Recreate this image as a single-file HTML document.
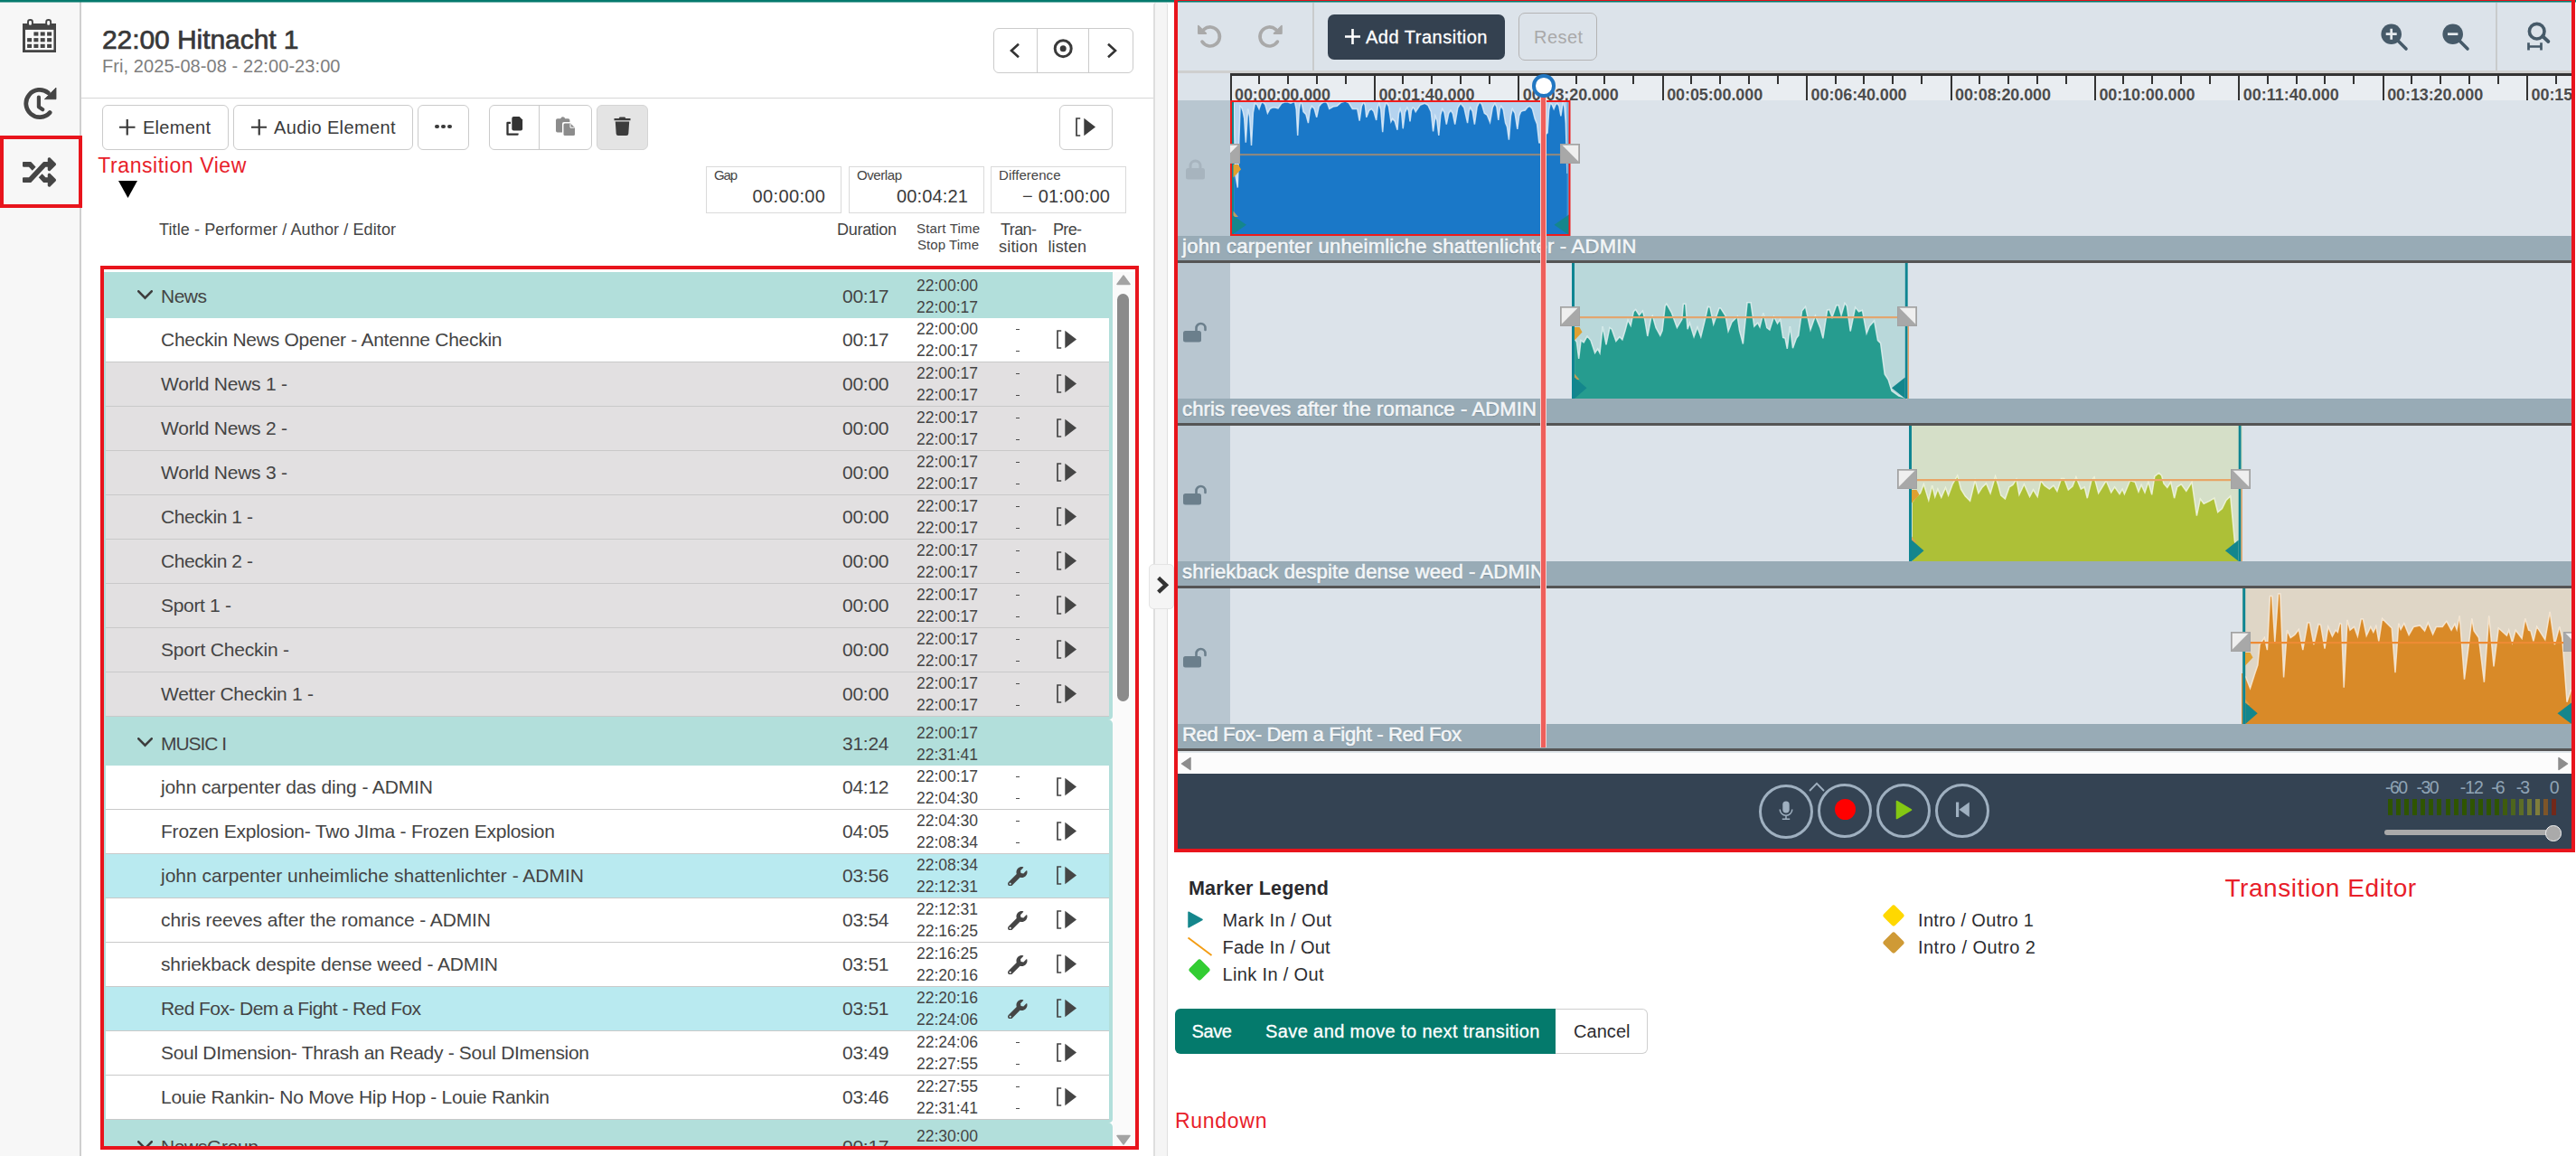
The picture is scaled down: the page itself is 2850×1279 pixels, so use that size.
<!DOCTYPE html>
<html><head><meta charset="utf-8"><title>Transition Editor</title><style>
html,body{margin:0;padding:0;}
body{width:2850px;height:1279px;position:relative;overflow:hidden;background:#fff;font-family:"Liberation Sans",sans-serif;}
.b{position:absolute;box-sizing:border-box;display:block;}
.t{position:absolute;white-space:pre;display:block;}
</style></head>
<body>
<div class="b" style="left:0px;top:0px;width:2850px;height:2px;background:#057a6d;"></div>
<div class="b" style="left:0px;top:2px;width:2850px;height:1px;background:rgba(5,122,109,0.5);z-index:5;"></div>
<div class="b" style="left:0px;top:2px;width:88px;height:1277px;background:#f7f7f7;"></div>
<div class="b" style="left:88px;top:2px;width:2px;height:1277px;background:#cfcfcf;"></div>
<svg class="b" style="left:25px;top:21px;" width="37" height="37" viewBox="0 0 37 37"><path fill="#454545" d="M0 5h37v32H0z"/><rect x="3" y="11.900" width="31.400" height="22.300" fill="#f9f9f9"/><rect x="12.4" y="14.4" width="5" height="4.2" fill="#454545"/><rect x="19.7" y="14.4" width="5" height="4.2" fill="#454545"/><rect x="27.1" y="14.4" width="5" height="4.2" fill="#454545"/><rect x="5.1" y="21.1" width="5" height="4.2" fill="#454545"/><rect x="12.4" y="21.1" width="5" height="4.2" fill="#454545"/><rect x="19.7" y="21.1" width="5" height="4.2" fill="#454545"/><rect x="27.1" y="21.1" width="5" height="4.2" fill="#454545"/><rect x="5.1" y="27.8" width="5" height="4.2" fill="#454545"/><rect x="12.4" y="27.8" width="5" height="4.2" fill="#454545"/><rect x="19.7" y="27.8" width="5" height="4.2" fill="#454545"/><rect x="27.1" y="27.8" width="5" height="4.2" fill="#454545"/><rect x="6.0" y="1" width="4.900" height="6.800" rx="2.300" fill="#f7f7f7" stroke="#454545" stroke-width="1.900"/><rect x="26.2" y="1" width="4.900" height="6.800" rx="2.300" fill="#f7f7f7" stroke="#454545" stroke-width="1.900"/></svg>
<svg class="b" style="left:26px;top:96px;" width="38" height="38" viewBox="0 0 38 38"><path d="M27.20 6.60A15.1 15.1 0 1 0 29.12 28.60" fill="none" stroke="#454545" stroke-width="4.800" stroke-linecap="round"/><path d="M36 1V13.700H23.300z" fill="#454545" stroke="#454545" stroke-width="0.800" stroke-linejoin="round"/><path d="M16.900 11.500V22.300L21.300 25.200" fill="none" stroke="#454545" stroke-width="4.200" stroke-linecap="round" stroke-linejoin="round"/></svg>
<svg class="b" style="left:25px;top:171.5px;" width="37" height="37" viewBox="0 0 512 512"><path fill="#454545" d="M504.971 359.029c9.373 9.373 9.373 24.569 0 33.941l-80 79.984c-15.01 15.01-40.971 4.49-40.971-16.971V416h-58.785a12.004 12.004 0 0 1-8.773-3.812l-70.556-75.596 53.333-57.143L352 336h32v-39.981c0-21.438 25.943-31.998 40.971-16.971l80 79.981zM12 176h84l52.781 56.551 53.333-57.143-70.556-75.596A11.999 11.999 0 0 0 122.785 96H12c-6.627 0-12 5.373-12 12v56c0 6.627 5.373 12 12 12zm372 0v39.984c0 21.46 25.961 31.98 40.971 16.971l80-79.984c9.373-9.373 9.373-24.569 0-33.941l-80-79.981C409.943 24.021 384 34.582 384 56.019V96h-58.785a12.004 12.004 0 0 0-8.773 3.812L96 336H12c-6.627 0-12 5.373-12 12v56c0 6.627 5.373 12 12 12h110.785c3.326 0 6.503-1.381 8.773-3.812L352 176h32z"/></svg>
<div class="b" style="left:0px;top:150px;width:91px;height:80px;border:4px solid #e8141c;"></div>
<span class="t" style="left:113.00px;top:29.21px;font-size:30px;line-height:30px;color:#383838;letter-spacing:-0.066px;-webkit-text-stroke:0.7px #383838;">22:00 Hitnacht 1</span>
<span class="t" style="left:113.00px;top:63.07px;font-size:20px;line-height:20px;color:#7e7e7e;letter-spacing:0.079px;">Fri, 2025-08-08 - 22:00-23:00</span>
<div class="b" style="left:90px;top:108px;width:1186px;height:1px;background:#d6d6d6;"></div>
<div class="b" style="left:1099px;top:31px;width:154.5px;height:49.5px;background:#fff;border:1px solid #cbcbcb;border-radius:6px;"></div>
<div class="b" style="left:1146.8px;top:32px;width:1px;height:47.5px;background:#cbcbcb;"></div>
<div class="b" style="left:1203.8px;top:32px;width:1px;height:47.5px;background:#cbcbcb;"></div>
<svg class="b" style="left:1116px;top:47px;" width="14" height="18" viewBox="0 0 14 18"><path d="M11 1.800L3 9L11 16.200" fill="none" stroke="#333" stroke-width="2.600"/></svg>
<svg class="b" style="left:1223px;top:47px;" width="14" height="18" viewBox="0 0 14 18"><path d="M3 1.800L11 9L3 16.200" fill="none" stroke="#333" stroke-width="2.600"/></svg>
<svg class="b" style="left:1165px;top:43px;" width="22" height="22" viewBox="0 0 22 22"><circle cx="11.200" cy="10.700" r="9" fill="none" stroke="#3a3a3a" stroke-width="3"/><circle cx="11.200" cy="10.700" r="3.500" fill="#3a3a3a"/></svg>
<div class="b" style="left:113px;top:116px;width:139.5px;height:49.5px;background:#fff;border:1px solid #cbcbcb;border-radius:6px;"></div>
<svg class="b" style="left:132px;top:132px;" width="17.5" height="17.5" viewBox="0 0 17.5 17.5"><path d="M8.75 0V17.5M0 8.75H17.5" stroke="#3a3a3a" stroke-width="2.2" fill="none"/></svg>
<span class="t" style="left:158.00px;top:130.57px;font-size:20px;line-height:20px;color:#3a3a3a;letter-spacing:0.271px;">Element</span>
<div class="b" style="left:258px;top:116px;width:199px;height:49.5px;background:#fff;border:1px solid #cbcbcb;border-radius:6px;"></div>
<svg class="b" style="left:277.5px;top:132px;" width="17.5" height="17.5" viewBox="0 0 17.5 17.5"><path d="M8.75 0V17.5M0 8.75H17.5" stroke="#3a3a3a" stroke-width="2.2" fill="none"/></svg>
<span class="t" style="left:303.00px;top:130.57px;font-size:20px;line-height:20px;color:#3a3a3a;letter-spacing:0.368px;">Audio Element</span>
<div class="b" style="left:462px;top:116px;width:57px;height:49.5px;background:#fff;border:1px solid #cbcbcb;border-radius:6px;"></div>
<div class="b" style="left:481px;top:137.8px;width:4.5px;height:4.5px;background:#3a3a3a;border-radius:50%;"></div>
<div class="b" style="left:488px;top:137.8px;width:4.5px;height:4.5px;background:#3a3a3a;border-radius:50%;"></div>
<div class="b" style="left:495px;top:137.8px;width:4.5px;height:4.5px;background:#3a3a3a;border-radius:50%;"></div>
<div class="b" style="left:541px;top:116px;width:114px;height:49.5px;background:#fff;border:1px solid #cbcbcb;border-radius:6px;"></div>
<div class="b" style="left:596px;top:117px;width:1px;height:47.5px;background:#cbcbcb;"></div>
<svg class="b" style="left:560px;top:129.4px;" width="19" height="21.5" viewBox="0 0 19 21.5"><path d="M8.300 0h6.300l3.500 3.500v9.900a2 2 0 0 1-2 2H8.300a2 2 0 0 1-2-2V2a2 2 0 0 1 2-2z" fill="#333"/><path d="M5 6.900H1.500V19.700H12.500V18.600" fill="none" stroke="#333" stroke-width="2.300" stroke-linejoin="round"/></svg>
<svg class="b" style="left:615px;top:129px;" width="21" height="21" viewBox="0 0 21 21"><path d="M1.8 2.2h3.4a2.6 2.6 0 0 1 5 0h3.4a1.8 1.8 0 0 1 1.8 1.8V6H9a2 2 0 0 0-2 2v9.5H1.8A1.8 1.8 0 0 1 0 15.700V4a1.800 1.800 0 0 1 1.800-1.800z" fill="#8c8c8c"/><path d="M10 7.500h6.200l4.800 4.800V19.500a1.500 1.500 0 0 1-1.500 1.500H10a1.500 1.500 0 0 1-1.500-1.500V9A1.500 1.500 0 0 1 10 7.500z" fill="#8c8c8c"/><path d="M16 7.800v4.400h4.700" fill="none" stroke="#fff" stroke-width="1"/></svg>
<div class="b" style="left:660px;top:116px;width:57px;height:49.5px;background:#e4e4e4;border:1px solid #d4d4d4;border-radius:6px;"></div>
<svg class="b" style="left:679px;top:128.6px;" width="19" height="21" viewBox="0 0 19 21"><path d="M0.500 2h5.200l0.900-1.600h5.800l0.900 1.600h5.200v2.300H0.500z" fill="#3c3c3c"/><path d="M1.800 5.600h15.400l-0.900 13.400a2.200 2.200 0 0 1-2.200 2H4.900a2.200 2.200 0 0 1-2.200-2z" fill="#3c3c3c"/></svg>
<div class="b" style="left:1172px;top:116px;width:59px;height:49.5px;background:#fff;border:1px solid #cbcbcb;border-radius:6px;"></div>
<svg class="b" style="left:1190px;top:130px;" width="22.0" height="21.0" viewBox="0 0 22 21"><path d="M5.2 1H1v19h4.2" fill="none" stroke="#3c3c3c" stroke-width="1.7"/><path d="M9.3 0.8L22 10.5L9.3 20.2z" fill="#3c3c3c"/></svg>
<span class="t" style="left:108.30px;top:171.53px;font-size:23px;line-height:23px;color:#e8202a;letter-spacing:0.574px;">Transition View</span>
<svg class="b" style="left:131px;top:200px;" width="21" height="19" viewBox="0 0 21 19"><path d="M0 0H21L10.500 19z" fill="#000"/></svg>
<div class="b" style="left:781px;top:184px;width:150px;height:52px;background:#fff;border:1px solid #dadada;"></div>
<span class="t" style="left:790.00px;top:186.30px;font-size:15px;line-height:15px;color:#444;letter-spacing:-1.180px;">Gap</span>
<span class="t" style="left:832.50px;top:206.82px;font-size:20px;line-height:20px;color:#3a3a3a;letter-spacing:0.377px;">00:00:00</span>
<div class="b" style="left:939px;top:184px;width:150px;height:52px;background:#fff;border:1px solid #dadada;"></div>
<span class="t" style="left:948.00px;top:186.30px;font-size:15px;line-height:15px;color:#444;letter-spacing:-0.422px;">Overlap</span>
<span class="t" style="left:992.00px;top:206.82px;font-size:20px;line-height:20px;color:#3a3a3a;letter-spacing:0.163px;">00:04:21</span>
<div class="b" style="left:1096px;top:184px;width:150px;height:52px;background:#fff;border:1px solid #dadada;"></div>
<span class="t" style="left:1105.00px;top:186.30px;font-size:15px;line-height:15px;color:#444;letter-spacing:0.045px;">Difference</span>
<span class="t" style="left:1131.00px;top:206.82px;font-size:20px;line-height:20px;color:#3a3a3a;letter-spacing:0.212px;">− 01:00:00</span>
<span class="t" style="left:176.00px;top:244.76px;font-size:18px;line-height:18px;color:#444;letter-spacing:0.105px;">Title - Performer / Author / Editor</span>
<span class="t" style="left:926.00px;top:244.76px;font-size:18px;line-height:18px;color:#444;letter-spacing:-0.292px;">Duration</span>
<span class="t" style="left:1014.00px;top:244.80px;font-size:15px;line-height:15px;color:#444;letter-spacing:0.182px;">Start Time</span>
<span class="t" style="left:1015.00px;top:262.80px;font-size:15px;line-height:15px;color:#444;letter-spacing:0.059px;">Stop Time</span>
<span class="t" style="left:1107.00px;top:244.76px;font-size:18px;line-height:18px;color:#444;letter-spacing:-0.586px;">Tran-</span>
<span class="t" style="left:1105.00px;top:264.26px;font-size:18px;line-height:18px;color:#444;letter-spacing:0.194px;">sition</span>
<span class="t" style="left:1165.00px;top:244.76px;font-size:18px;line-height:18px;color:#444;letter-spacing:-0.672px;">Pre-</span>
<span class="t" style="left:1159.50px;top:264.26px;font-size:18px;line-height:18px;color:#444;letter-spacing:0.094px;">listen</span>
<div class="b" style="left:0;top:298px;width:1260px;height:970px;overflow:hidden;"><div class="b" style="left:0;top:-298px;width:1260px;height:1279px;">
<div class="b" style="left:1227px;top:301px;width:4px;height:495px;background:#b2dfdb;border-radius:0 0 4px 0;"></div>
<div class="b" style="left:1227px;top:801px;width:4px;height:441px;background:#b2dfdb;border-radius:0 0 4px 0;"></div>
<div class="b" style="left:1227px;top:1247px;width:4px;height:30px;background:#b2dfdb;"></div>
<div class="b" style="left:115px;top:301px;width:2px;height:970px;background:#b2dfdb;"></div>
<div class="b" style="left:1231px;top:298px;width:25px;height:972px;background:#fafafa;"></div>
<div class="b" style="left:117px;top:298px;width:1110px;height:3px;background:#b2dfdb;"></div>
<div class="b" style="left:117px;top:301px;width:1114px;height:51px;background:#b2dfdb;border-top-right-radius:5px;"></div>
<svg class="b" style="left:152px;top:320.8px;" width="17" height="11" viewBox="0 0 17 11"><path d="M1.300 1.300L8.500 8.700L15.700 1.300" fill="none" stroke="#3d3d3d" stroke-width="2.600" stroke-linecap="round"/></svg>
<span class="t" style="left:178.00px;top:317.42px;font-size:21px;line-height:21px;color:#444;letter-spacing:-0.505px;">News</span>
<span class="t" style="left:932.00px;top:317.42px;font-size:21px;line-height:21px;color:#444;letter-spacing:-0.266px;">00:17</span>
<span class="t" style="left:1014.00px;top:308.19px;font-size:17.5px;line-height:17.5px;color:#444;letter-spacing:-0.018px;">22:00:00</span>
<span class="t" style="left:1014.00px;top:332.19px;font-size:17.5px;line-height:17.5px;color:#444;letter-spacing:-0.018px;">22:00:17</span>
<div class="b" style="left:117px;top:298px;width:1140px;height:3px;background:#fff;"></div>
<div class="b" style="left:117px;top:352px;width:1110px;height:49px;background:#fff;border-bottom:1px solid #c9c9c9;"></div>
<span class="t" style="left:178.00px;top:365.42px;font-size:21px;line-height:21px;color:#444;letter-spacing:-0.279px;">Checkin News Opener - Antenne Checkin</span>
<span class="t" style="left:932.00px;top:365.42px;font-size:21px;line-height:21px;color:#444;letter-spacing:-0.266px;">00:17</span>
<span class="t" style="left:1014.00px;top:356.19px;font-size:17.5px;line-height:17.5px;color:#444;letter-spacing:-0.018px;">22:00:00</span>
<span class="t" style="left:1014.00px;top:380.19px;font-size:17.5px;line-height:17.5px;color:#444;letter-spacing:-0.018px;">22:00:17</span>
<div class="b" style="left:1123.5px;top:364px;width:4.6px;height:1.25px;background:#4c4c4c;"></div>
<div class="b" style="left:1123.5px;top:388px;width:4.6px;height:1.25px;background:#4c4c4c;"></div>
<svg class="b" style="left:1169px;top:364.8px;" width="22.0" height="21.0" viewBox="0 0 22 21"><path d="M5.2 1H1v19h4.2" fill="none" stroke="#454545" stroke-width="1.7"/><path d="M9.3 0.8L22 10.5L9.3 20.2z" fill="#454545"/></svg>
<div class="b" style="left:117px;top:401px;width:1110px;height:49px;background:#e2e0e1;border-bottom:1px solid #c9c9c9;"></div>
<span class="t" style="left:178.00px;top:414.42px;font-size:21px;line-height:21px;color:#444;letter-spacing:-0.243px;">World News 1 -</span>
<span class="t" style="left:932.00px;top:414.42px;font-size:21px;line-height:21px;color:#444;letter-spacing:-0.266px;">00:00</span>
<span class="t" style="left:1014.00px;top:405.19px;font-size:17.5px;line-height:17.5px;color:#444;letter-spacing:-0.018px;">22:00:17</span>
<span class="t" style="left:1014.00px;top:429.19px;font-size:17.5px;line-height:17.5px;color:#444;letter-spacing:-0.018px;">22:00:17</span>
<div class="b" style="left:1123.5px;top:413px;width:4.6px;height:1.25px;background:#4c4c4c;"></div>
<div class="b" style="left:1123.5px;top:437px;width:4.6px;height:1.25px;background:#4c4c4c;"></div>
<svg class="b" style="left:1169px;top:413.8px;" width="22.0" height="21.0" viewBox="0 0 22 21"><path d="M5.2 1H1v19h4.2" fill="none" stroke="#454545" stroke-width="1.7"/><path d="M9.3 0.8L22 10.5L9.3 20.2z" fill="#454545"/></svg>
<div class="b" style="left:117px;top:450px;width:1110px;height:49px;background:#e2e0e1;border-bottom:1px solid #c9c9c9;"></div>
<span class="t" style="left:178.00px;top:463.42px;font-size:21px;line-height:21px;color:#444;letter-spacing:-0.243px;">World News 2 -</span>
<span class="t" style="left:932.00px;top:463.42px;font-size:21px;line-height:21px;color:#444;letter-spacing:-0.266px;">00:00</span>
<span class="t" style="left:1014.00px;top:454.19px;font-size:17.5px;line-height:17.5px;color:#444;letter-spacing:-0.018px;">22:00:17</span>
<span class="t" style="left:1014.00px;top:478.19px;font-size:17.5px;line-height:17.5px;color:#444;letter-spacing:-0.018px;">22:00:17</span>
<div class="b" style="left:1123.5px;top:462px;width:4.6px;height:1.25px;background:#4c4c4c;"></div>
<div class="b" style="left:1123.5px;top:486px;width:4.6px;height:1.25px;background:#4c4c4c;"></div>
<svg class="b" style="left:1169px;top:462.8px;" width="22.0" height="21.0" viewBox="0 0 22 21"><path d="M5.2 1H1v19h4.2" fill="none" stroke="#454545" stroke-width="1.7"/><path d="M9.3 0.8L22 10.5L9.3 20.2z" fill="#454545"/></svg>
<div class="b" style="left:117px;top:499px;width:1110px;height:49px;background:#e2e0e1;border-bottom:1px solid #c9c9c9;"></div>
<span class="t" style="left:178.00px;top:512.42px;font-size:21px;line-height:21px;color:#444;letter-spacing:-0.243px;">World News 3 -</span>
<span class="t" style="left:932.00px;top:512.42px;font-size:21px;line-height:21px;color:#444;letter-spacing:-0.266px;">00:00</span>
<span class="t" style="left:1014.00px;top:503.19px;font-size:17.5px;line-height:17.5px;color:#444;letter-spacing:-0.018px;">22:00:17</span>
<span class="t" style="left:1014.00px;top:527.19px;font-size:17.5px;line-height:17.5px;color:#444;letter-spacing:-0.018px;">22:00:17</span>
<div class="b" style="left:1123.5px;top:511px;width:4.6px;height:1.25px;background:#4c4c4c;"></div>
<div class="b" style="left:1123.5px;top:535px;width:4.6px;height:1.25px;background:#4c4c4c;"></div>
<svg class="b" style="left:1169px;top:511.8px;" width="22.0" height="21.0" viewBox="0 0 22 21"><path d="M5.2 1H1v19h4.2" fill="none" stroke="#454545" stroke-width="1.7"/><path d="M9.3 0.8L22 10.5L9.3 20.2z" fill="#454545"/></svg>
<div class="b" style="left:117px;top:548px;width:1110px;height:49px;background:#e2e0e1;border-bottom:1px solid #c9c9c9;"></div>
<span class="t" style="left:178.00px;top:561.42px;font-size:21px;line-height:21px;color:#444;letter-spacing:-0.422px;">Checkin 1 -</span>
<span class="t" style="left:932.00px;top:561.42px;font-size:21px;line-height:21px;color:#444;letter-spacing:-0.266px;">00:00</span>
<span class="t" style="left:1014.00px;top:552.19px;font-size:17.5px;line-height:17.5px;color:#444;letter-spacing:-0.018px;">22:00:17</span>
<span class="t" style="left:1014.00px;top:576.19px;font-size:17.5px;line-height:17.5px;color:#444;letter-spacing:-0.018px;">22:00:17</span>
<div class="b" style="left:1123.5px;top:560px;width:4.6px;height:1.25px;background:#4c4c4c;"></div>
<div class="b" style="left:1123.5px;top:584px;width:4.6px;height:1.25px;background:#4c4c4c;"></div>
<svg class="b" style="left:1169px;top:560.8px;" width="22.0" height="21.0" viewBox="0 0 22 21"><path d="M5.2 1H1v19h4.2" fill="none" stroke="#454545" stroke-width="1.7"/><path d="M9.3 0.8L22 10.5L9.3 20.2z" fill="#454545"/></svg>
<div class="b" style="left:117px;top:597px;width:1110px;height:49px;background:#e2e0e1;border-bottom:1px solid #c9c9c9;"></div>
<span class="t" style="left:178.00px;top:610.42px;font-size:21px;line-height:21px;color:#444;letter-spacing:-0.422px;">Checkin 2 -</span>
<span class="t" style="left:932.00px;top:610.42px;font-size:21px;line-height:21px;color:#444;letter-spacing:-0.266px;">00:00</span>
<span class="t" style="left:1014.00px;top:601.19px;font-size:17.5px;line-height:17.5px;color:#444;letter-spacing:-0.018px;">22:00:17</span>
<span class="t" style="left:1014.00px;top:625.19px;font-size:17.5px;line-height:17.5px;color:#444;letter-spacing:-0.018px;">22:00:17</span>
<div class="b" style="left:1123.5px;top:609px;width:4.6px;height:1.25px;background:#4c4c4c;"></div>
<div class="b" style="left:1123.5px;top:633px;width:4.6px;height:1.25px;background:#4c4c4c;"></div>
<svg class="b" style="left:1169px;top:609.8px;" width="22.0" height="21.0" viewBox="0 0 22 21"><path d="M5.2 1H1v19h4.2" fill="none" stroke="#454545" stroke-width="1.7"/><path d="M9.3 0.8L22 10.5L9.3 20.2z" fill="#454545"/></svg>
<div class="b" style="left:117px;top:646px;width:1110px;height:49px;background:#e2e0e1;border-bottom:1px solid #c9c9c9;"></div>
<span class="t" style="left:178.00px;top:659.42px;font-size:21px;line-height:21px;color:#444;letter-spacing:-0.318px;">Sport 1 -</span>
<span class="t" style="left:932.00px;top:659.42px;font-size:21px;line-height:21px;color:#444;letter-spacing:-0.266px;">00:00</span>
<span class="t" style="left:1014.00px;top:650.19px;font-size:17.5px;line-height:17.5px;color:#444;letter-spacing:-0.018px;">22:00:17</span>
<span class="t" style="left:1014.00px;top:674.19px;font-size:17.5px;line-height:17.5px;color:#444;letter-spacing:-0.018px;">22:00:17</span>
<div class="b" style="left:1123.5px;top:658px;width:4.6px;height:1.25px;background:#4c4c4c;"></div>
<div class="b" style="left:1123.5px;top:682px;width:4.6px;height:1.25px;background:#4c4c4c;"></div>
<svg class="b" style="left:1169px;top:658.8px;" width="22.0" height="21.0" viewBox="0 0 22 21"><path d="M5.2 1H1v19h4.2" fill="none" stroke="#454545" stroke-width="1.7"/><path d="M9.3 0.8L22 10.5L9.3 20.2z" fill="#454545"/></svg>
<div class="b" style="left:117px;top:695px;width:1110px;height:49px;background:#e2e0e1;border-bottom:1px solid #c9c9c9;"></div>
<span class="t" style="left:178.00px;top:708.42px;font-size:21px;line-height:21px;color:#444;letter-spacing:-0.195px;">Sport Checkin -</span>
<span class="t" style="left:932.00px;top:708.42px;font-size:21px;line-height:21px;color:#444;letter-spacing:-0.266px;">00:00</span>
<span class="t" style="left:1014.00px;top:699.19px;font-size:17.5px;line-height:17.5px;color:#444;letter-spacing:-0.018px;">22:00:17</span>
<span class="t" style="left:1014.00px;top:723.19px;font-size:17.5px;line-height:17.5px;color:#444;letter-spacing:-0.018px;">22:00:17</span>
<div class="b" style="left:1123.5px;top:707px;width:4.6px;height:1.25px;background:#4c4c4c;"></div>
<div class="b" style="left:1123.5px;top:731px;width:4.6px;height:1.25px;background:#4c4c4c;"></div>
<svg class="b" style="left:1169px;top:707.8px;" width="22.0" height="21.0" viewBox="0 0 22 21"><path d="M5.2 1H1v19h4.2" fill="none" stroke="#454545" stroke-width="1.7"/><path d="M9.3 0.8L22 10.5L9.3 20.2z" fill="#454545"/></svg>
<div class="b" style="left:117px;top:744px;width:1110px;height:49px;background:#e2e0e1;border-bottom:1px solid #c9c9c9;"></div>
<span class="t" style="left:178.00px;top:757.42px;font-size:21px;line-height:21px;color:#444;letter-spacing:-0.266px;">Wetter Checkin 1 -</span>
<span class="t" style="left:932.00px;top:757.42px;font-size:21px;line-height:21px;color:#444;letter-spacing:-0.266px;">00:00</span>
<span class="t" style="left:1014.00px;top:748.19px;font-size:17.5px;line-height:17.5px;color:#444;letter-spacing:-0.018px;">22:00:17</span>
<span class="t" style="left:1014.00px;top:772.19px;font-size:17.5px;line-height:17.5px;color:#444;letter-spacing:-0.018px;">22:00:17</span>
<div class="b" style="left:1123.5px;top:756px;width:4.6px;height:1.25px;background:#4c4c4c;"></div>
<div class="b" style="left:1123.5px;top:780px;width:4.6px;height:1.25px;background:#4c4c4c;"></div>
<svg class="b" style="left:1169px;top:756.8px;" width="22.0" height="21.0" viewBox="0 0 22 21"><path d="M5.2 1H1v19h4.2" fill="none" stroke="#454545" stroke-width="1.7"/><path d="M9.3 0.8L22 10.5L9.3 20.2z" fill="#454545"/></svg>
<div class="b" style="left:117px;top:793px;width:1110px;height:3px;background:#b2dfdb;"></div>
<div class="b" style="left:117px;top:796px;width:1114px;height:51px;background:#b2dfdb;border-top-right-radius:5px;"></div>
<svg class="b" style="left:152px;top:815.8000000000001px;" width="17" height="11" viewBox="0 0 17 11"><path d="M1.300 1.300L8.500 8.700L15.700 1.300" fill="none" stroke="#3d3d3d" stroke-width="2.600" stroke-linecap="round"/></svg>
<span class="t" style="left:178.00px;top:812.42px;font-size:21px;line-height:21px;color:#444;letter-spacing:-1.057px;">MUSIC I</span>
<span class="t" style="left:932.00px;top:812.42px;font-size:21px;line-height:21px;color:#444;letter-spacing:-0.266px;">31:24</span>
<span class="t" style="left:1014.00px;top:803.19px;font-size:17.5px;line-height:17.5px;color:#444;letter-spacing:-0.018px;">22:00:17</span>
<span class="t" style="left:1014.00px;top:827.19px;font-size:17.5px;line-height:17.5px;color:#444;letter-spacing:-0.018px;">22:31:41</span>
<div class="b" style="left:117px;top:847px;width:1110px;height:49px;background:#fff;border-bottom:1px solid #c9c9c9;"></div>
<span class="t" style="left:178.00px;top:860.42px;font-size:21px;line-height:21px;color:#444;letter-spacing:-0.122px;">john carpenter das ding - ADMIN</span>
<span class="t" style="left:932.00px;top:860.42px;font-size:21px;line-height:21px;color:#444;letter-spacing:-0.266px;">04:12</span>
<span class="t" style="left:1014.00px;top:851.19px;font-size:17.5px;line-height:17.5px;color:#444;letter-spacing:-0.018px;">22:00:17</span>
<span class="t" style="left:1014.00px;top:875.19px;font-size:17.5px;line-height:17.5px;color:#444;letter-spacing:-0.018px;">22:04:30</span>
<div class="b" style="left:1123.5px;top:859px;width:4.6px;height:1.25px;background:#4c4c4c;"></div>
<div class="b" style="left:1123.5px;top:883px;width:4.6px;height:1.25px;background:#4c4c4c;"></div>
<svg class="b" style="left:1169px;top:859.8px;" width="22.0" height="21.0" viewBox="0 0 22 21"><path d="M5.2 1H1v19h4.2" fill="none" stroke="#454545" stroke-width="1.7"/><path d="M9.3 0.8L22 10.5L9.3 20.2z" fill="#454545"/></svg>
<div class="b" style="left:117px;top:896px;width:1110px;height:49px;background:#fff;border-bottom:1px solid #c9c9c9;"></div>
<span class="t" style="left:178.00px;top:909.42px;font-size:21px;line-height:21px;color:#444;letter-spacing:-0.215px;">Frozen Explosion- Two JIma - Frozen Explosion</span>
<span class="t" style="left:932.00px;top:909.42px;font-size:21px;line-height:21px;color:#444;letter-spacing:-0.266px;">04:05</span>
<span class="t" style="left:1014.00px;top:900.19px;font-size:17.5px;line-height:17.5px;color:#444;letter-spacing:-0.018px;">22:04:30</span>
<span class="t" style="left:1014.00px;top:924.19px;font-size:17.5px;line-height:17.5px;color:#444;letter-spacing:-0.018px;">22:08:34</span>
<div class="b" style="left:1123.5px;top:908px;width:4.6px;height:1.25px;background:#4c4c4c;"></div>
<div class="b" style="left:1123.5px;top:932px;width:4.6px;height:1.25px;background:#4c4c4c;"></div>
<svg class="b" style="left:1169px;top:908.8px;" width="22.0" height="21.0" viewBox="0 0 22 21"><path d="M5.2 1H1v19h4.2" fill="none" stroke="#454545" stroke-width="1.7"/><path d="M9.3 0.8L22 10.5L9.3 20.2z" fill="#454545"/></svg>
<div class="b" style="left:117px;top:945px;width:1110px;height:49px;background:#b9eaf0;border-bottom:1px solid #c9c9c9;"></div>
<span class="t" style="left:178.00px;top:958.42px;font-size:21px;line-height:21px;color:#444;letter-spacing:-0.001px;">john carpenter unheimliche shattenlichter - ADMIN</span>
<span class="t" style="left:932.00px;top:958.42px;font-size:21px;line-height:21px;color:#444;letter-spacing:-0.266px;">03:56</span>
<span class="t" style="left:1014.00px;top:949.19px;font-size:17.5px;line-height:17.5px;color:#444;letter-spacing:-0.018px;">22:08:34</span>
<span class="t" style="left:1014.00px;top:973.19px;font-size:17.5px;line-height:17.5px;color:#444;letter-spacing:-0.018px;">22:12:31</span>
<svg class="b" style="left:1115px;top:958.5px;" width="21.5" height="21.5" viewBox="0 0 512 512"><path fill="#454545" d="M507.73 109.1c-2.24-9.03-13.54-12.09-20.12-5.51l-74.36 74.36-67.88-11.31-11.31-67.88 74.36-74.36c6.62-6.62 3.43-17.9-5.66-20.16-47.38-11.74-99.55.91-136.58 37.93-39.64 39.64-50.55 97.1-34.05 147.2L18.74 402.76c-24.99 24.99-24.99 65.51 0 90.5 24.99 24.99 65.51 24.99 90.5 0l213.21-213.21c50.12 16.71 107.47 5.68 147.37-34.22 37.07-37.07 49.7-89.32 37.91-136.73zM64 472c-13.25 0-24-10.75-24-24 0-13.26 10.75-24 24-24s24 10.74 24 24c0 13.25-10.75 24-24 24z"/></svg>
<svg class="b" style="left:1169px;top:957.8px;" width="22.0" height="21.0" viewBox="0 0 22 21"><path d="M5.2 1H1v19h4.2" fill="none" stroke="#454545" stroke-width="1.7"/><path d="M9.3 0.8L22 10.5L9.3 20.2z" fill="#454545"/></svg>
<div class="b" style="left:117px;top:994px;width:1110px;height:49px;background:#fff;border-bottom:1px solid #c9c9c9;"></div>
<span class="t" style="left:178.00px;top:1007.42px;font-size:21px;line-height:21px;color:#444;letter-spacing:-0.103px;">chris reeves after the romance - ADMIN</span>
<span class="t" style="left:932.00px;top:1007.42px;font-size:21px;line-height:21px;color:#444;letter-spacing:-0.266px;">03:54</span>
<span class="t" style="left:1014.00px;top:998.19px;font-size:17.5px;line-height:17.5px;color:#444;letter-spacing:-0.018px;">22:12:31</span>
<span class="t" style="left:1014.00px;top:1022.19px;font-size:17.5px;line-height:17.5px;color:#444;letter-spacing:-0.018px;">22:16:25</span>
<svg class="b" style="left:1115px;top:1007.5px;" width="21.5" height="21.5" viewBox="0 0 512 512"><path fill="#454545" d="M507.73 109.1c-2.24-9.03-13.54-12.09-20.12-5.51l-74.36 74.36-67.88-11.31-11.31-67.88 74.36-74.36c6.62-6.62 3.43-17.9-5.66-20.16-47.38-11.74-99.55.91-136.58 37.93-39.64 39.64-50.55 97.1-34.05 147.2L18.74 402.76c-24.99 24.99-24.99 65.51 0 90.5 24.99 24.99 65.51 24.99 90.5 0l213.21-213.21c50.12 16.71 107.47 5.68 147.37-34.22 37.07-37.07 49.7-89.32 37.91-136.73zM64 472c-13.25 0-24-10.75-24-24 0-13.26 10.75-24 24-24s24 10.74 24 24c0 13.25-10.75 24-24 24z"/></svg>
<svg class="b" style="left:1169px;top:1006.8px;" width="22.0" height="21.0" viewBox="0 0 22 21"><path d="M5.2 1H1v19h4.2" fill="none" stroke="#454545" stroke-width="1.7"/><path d="M9.3 0.8L22 10.5L9.3 20.2z" fill="#454545"/></svg>
<div class="b" style="left:117px;top:1043px;width:1110px;height:49px;background:#fff;border-bottom:1px solid #c9c9c9;"></div>
<span class="t" style="left:178.00px;top:1056.42px;font-size:21px;line-height:21px;color:#444;letter-spacing:-0.144px;">shriekback despite dense weed - ADMIN</span>
<span class="t" style="left:932.00px;top:1056.42px;font-size:21px;line-height:21px;color:#444;letter-spacing:-0.266px;">03:51</span>
<span class="t" style="left:1014.00px;top:1047.19px;font-size:17.5px;line-height:17.5px;color:#444;letter-spacing:-0.018px;">22:16:25</span>
<span class="t" style="left:1014.00px;top:1071.19px;font-size:17.5px;line-height:17.5px;color:#444;letter-spacing:-0.018px;">22:20:16</span>
<svg class="b" style="left:1115px;top:1056.5px;" width="21.5" height="21.5" viewBox="0 0 512 512"><path fill="#454545" d="M507.73 109.1c-2.24-9.03-13.54-12.09-20.12-5.51l-74.36 74.36-67.88-11.31-11.31-67.88 74.36-74.36c6.62-6.62 3.43-17.9-5.66-20.16-47.38-11.74-99.55.91-136.58 37.93-39.64 39.64-50.55 97.1-34.05 147.2L18.74 402.76c-24.99 24.99-24.99 65.51 0 90.5 24.99 24.99 65.51 24.99 90.5 0l213.21-213.21c50.12 16.71 107.47 5.68 147.37-34.22 37.07-37.07 49.7-89.32 37.91-136.73zM64 472c-13.25 0-24-10.75-24-24 0-13.26 10.75-24 24-24s24 10.74 24 24c0 13.25-10.75 24-24 24z"/></svg>
<svg class="b" style="left:1169px;top:1055.8px;" width="22.0" height="21.0" viewBox="0 0 22 21"><path d="M5.2 1H1v19h4.2" fill="none" stroke="#454545" stroke-width="1.7"/><path d="M9.3 0.8L22 10.5L9.3 20.2z" fill="#454545"/></svg>
<div class="b" style="left:117px;top:1092px;width:1110px;height:49px;background:#b9eaf0;border-bottom:1px solid #c9c9c9;"></div>
<span class="t" style="left:178.00px;top:1105.42px;font-size:21px;line-height:21px;color:#444;letter-spacing:-0.572px;">Red Fox- Dem a Fight - Red Fox</span>
<span class="t" style="left:932.00px;top:1105.42px;font-size:21px;line-height:21px;color:#444;letter-spacing:-0.266px;">03:51</span>
<span class="t" style="left:1014.00px;top:1096.19px;font-size:17.5px;line-height:17.5px;color:#444;letter-spacing:-0.018px;">22:20:16</span>
<span class="t" style="left:1014.00px;top:1120.19px;font-size:17.5px;line-height:17.5px;color:#444;letter-spacing:-0.018px;">22:24:06</span>
<svg class="b" style="left:1115px;top:1105.5px;" width="21.5" height="21.5" viewBox="0 0 512 512"><path fill="#454545" d="M507.73 109.1c-2.24-9.03-13.54-12.09-20.12-5.51l-74.36 74.36-67.88-11.31-11.31-67.88 74.36-74.36c6.62-6.62 3.43-17.9-5.66-20.16-47.38-11.74-99.55.91-136.58 37.93-39.64 39.64-50.55 97.1-34.05 147.2L18.74 402.76c-24.99 24.99-24.99 65.51 0 90.5 24.99 24.99 65.51 24.99 90.5 0l213.21-213.21c50.12 16.71 107.47 5.68 147.37-34.22 37.07-37.07 49.7-89.32 37.91-136.73zM64 472c-13.25 0-24-10.75-24-24 0-13.26 10.75-24 24-24s24 10.74 24 24c0 13.25-10.75 24-24 24z"/></svg>
<svg class="b" style="left:1169px;top:1104.8px;" width="22.0" height="21.0" viewBox="0 0 22 21"><path d="M5.2 1H1v19h4.2" fill="none" stroke="#454545" stroke-width="1.7"/><path d="M9.3 0.8L22 10.5L9.3 20.2z" fill="#454545"/></svg>
<div class="b" style="left:117px;top:1141px;width:1110px;height:49px;background:#fff;border-bottom:1px solid #c9c9c9;"></div>
<span class="t" style="left:178.00px;top:1154.42px;font-size:21px;line-height:21px;color:#444;letter-spacing:-0.312px;">Soul DImension- Thrash an Ready - Soul DImension</span>
<span class="t" style="left:932.00px;top:1154.42px;font-size:21px;line-height:21px;color:#444;letter-spacing:-0.266px;">03:49</span>
<span class="t" style="left:1014.00px;top:1145.19px;font-size:17.5px;line-height:17.5px;color:#444;letter-spacing:-0.018px;">22:24:06</span>
<span class="t" style="left:1014.00px;top:1169.19px;font-size:17.5px;line-height:17.5px;color:#444;letter-spacing:-0.018px;">22:27:55</span>
<div class="b" style="left:1123.5px;top:1153px;width:4.6px;height:1.25px;background:#4c4c4c;"></div>
<div class="b" style="left:1123.5px;top:1177px;width:4.6px;height:1.25px;background:#4c4c4c;"></div>
<svg class="b" style="left:1169px;top:1153.8px;" width="22.0" height="21.0" viewBox="0 0 22 21"><path d="M5.2 1H1v19h4.2" fill="none" stroke="#454545" stroke-width="1.7"/><path d="M9.3 0.8L22 10.5L9.3 20.2z" fill="#454545"/></svg>
<div class="b" style="left:117px;top:1190px;width:1110px;height:49px;background:#fff;border-bottom:1px solid #c9c9c9;"></div>
<span class="t" style="left:178.00px;top:1203.42px;font-size:21px;line-height:21px;color:#444;letter-spacing:-0.289px;">Louie Rankin- No Move Hip Hop - Louie Rankin</span>
<span class="t" style="left:932.00px;top:1203.42px;font-size:21px;line-height:21px;color:#444;letter-spacing:-0.266px;">03:46</span>
<span class="t" style="left:1014.00px;top:1194.19px;font-size:17.5px;line-height:17.5px;color:#444;letter-spacing:-0.018px;">22:27:55</span>
<span class="t" style="left:1014.00px;top:1218.19px;font-size:17.5px;line-height:17.5px;color:#444;letter-spacing:-0.018px;">22:31:41</span>
<div class="b" style="left:1123.5px;top:1202px;width:4.6px;height:1.25px;background:#4c4c4c;"></div>
<div class="b" style="left:1123.5px;top:1226px;width:4.6px;height:1.25px;background:#4c4c4c;"></div>
<svg class="b" style="left:1169px;top:1202.8px;" width="22.0" height="21.0" viewBox="0 0 22 21"><path d="M5.2 1H1v19h4.2" fill="none" stroke="#454545" stroke-width="1.7"/><path d="M9.3 0.8L22 10.5L9.3 20.2z" fill="#454545"/></svg>
<div class="b" style="left:117px;top:1239px;width:1110px;height:3px;background:#b2dfdb;"></div>
<div class="b" style="left:117px;top:1242px;width:1114px;height:50px;background:#b2dfdb;border-top-right-radius:5px;"></div>
<svg class="b" style="left:152px;top:1261.8px;" width="17" height="11" viewBox="0 0 17 11"><path d="M1.300 1.300L8.500 8.700L15.700 1.300" fill="none" stroke="#3d3d3d" stroke-width="2.600" stroke-linecap="round"/></svg>
<span class="t" style="left:178.00px;top:1258.42px;font-size:21px;line-height:21px;color:#444;letter-spacing:-0.361px;">NewsGroup</span>
<span class="t" style="left:932.00px;top:1258.42px;font-size:21px;line-height:21px;color:#444;letter-spacing:-0.266px;">00:17</span>
<span class="t" style="left:1014.00px;top:1249.19px;font-size:17.5px;line-height:17.5px;color:#444;letter-spacing:-0.018px;">22:30:00</span>
<span class="t" style="left:1014.00px;top:1273.19px;font-size:17.5px;line-height:17.5px;color:#444;letter-spacing:-0.018px;">22:30:17</span>
<svg class="b" style="left:1235px;top:304px;" width="16" height="12" viewBox="0 0 16 12"><path d="M8 1L15 10.500H1z" fill="#a3a3a3" stroke="#a3a3a3" stroke-width="1.500" stroke-linejoin="round"/></svg>
<div class="b" style="left:1236px;top:325px;width:13px;height:451px;background:#8b8b8b;border-radius:6.500px;"></div>
<svg class="b" style="left:1235px;top:1255px;" width="16" height="12" viewBox="0 0 16 12"><path d="M1 1.500H15L8 11z" fill="#a3a3a3" stroke="#a3a3a3" stroke-width="1.500" stroke-linejoin="round"/></svg>
</div></div>
<div class="b" style="left:111px;top:294px;width:1149px;height:978px;border:4px solid #e8141c;"></div>
<div class="b" style="left:1276px;top:3px;width:16px;height:1277px;background:#f5f5f5;border-left:2px solid #dedede;border-right:1px solid #e0e0e0;border-radius:3px 3px 0 0;"></div>
<div class="b" style="left:1271px;top:624px;width:27.5px;height:49.5px;background:#f5f5f5;border-radius:5px;border:1px solid #e4e4e4;"></div>
<svg class="b" style="left:1276px;top:636px;" width="20" height="23" viewBox="0 0 20 23"><path d="M5.600 3.400L14 11.300L5.600 19.200" fill="none" stroke="#333" stroke-width="4.400"/></svg>
<div class="b" style="left:1303px;top:2px;width:1542px;height:76px;background:#dce3ea;"></div>
<div class="b" style="left:1303px;top:78px;width:1542px;height:3px;background:#cfcfcf;"></div>
<div class="b" style="left:1303px;top:81px;width:1542px;height:30px;background:#dce3ea;"></div>
<div class="b" style="left:1361px;top:81px;width:1484px;height:30px;background:#e9edf1;"></div>
<div class="b" style="left:1361px;top:81px;width:1484px;height:2.5px;background:#333;"></div>
<div class="b" style="left:1451.5px;top:3px;width:2.5px;height:75px;background:#c9cbcc;"></div>
<div class="b" style="left:2760.8px;top:3px;width:2.5px;height:75px;background:#c9cbcc;"></div>
<svg class="b" style="left:1322px;top:24.2px;" width="32" height="32" viewBox="0 0 32 32"><path d="M9.900 8.600A10.500 10.500 0 1 1 8 22.100" fill="none" stroke="#a9a9a9" stroke-width="3.700" stroke-linecap="round"/><path d="M3.800 4.500V13.100H12.400z" fill="#a9a9a9" stroke="#a9a9a9" stroke-width="1.600" stroke-linejoin="round"/></svg>
<svg class="b" style="left:1390px;top:24.2px;" width="32" height="32" viewBox="0 0 32 32"><path d="M21.500 8.600A10.500 10.500 0 1 0 23.400 22.100" fill="none" stroke="#a9a9a9" stroke-width="3.700" stroke-linecap="round"/><path d="M28 4.500V13.100H19.400z" fill="#a9a9a9" stroke="#a9a9a9" stroke-width="1.600" stroke-linejoin="round"/></svg>
<div class="b" style="left:1469px;top:16px;width:196px;height:50px;background:#344150;border-radius:7px;"></div>
<svg class="b" style="left:1488px;top:32px;" width="17" height="17" viewBox="0 0 17 17"><path d="M8.500 0V17M0 8.500H17" stroke="#fff" stroke-width="2.600" fill="none"/></svg>
<span class="t" style="left:1511.00px;top:30.57px;font-size:20px;line-height:20px;color:#fff;letter-spacing:0.511px;-webkit-text-stroke:0.3px #fff;">Add Transition</span>
<div class="b" style="left:1680px;top:14px;width:87px;height:53px;border:1px solid #b4b4b4;border-radius:7px;"></div>
<span class="t" style="left:1697.00px;top:30.57px;font-size:20px;line-height:20px;color:#a9a9a9;letter-spacing:0.438px;">Reset</span>
<svg class="b" style="left:2634px;top:25.8px;" width="31" height="31" viewBox="0 0 31 31"><circle cx="11.700" cy="11.700" r="11.300" fill="#465a69"/><path d="M18.500 18.500L28 28" stroke="#465a69" stroke-width="3.600" stroke-linecap="round"/><path d="M11.700 5.700V17.700M5.700 11.700H17.700" stroke="#e6ebef" stroke-width="2.700"/></svg>
<svg class="b" style="left:2701.5px;top:25.8px;" width="31" height="31" viewBox="0 0 31 31"><circle cx="11.700" cy="11.700" r="11.300" fill="#465a69"/><path d="M18.500 18.500L28 28" stroke="#465a69" stroke-width="3.600" stroke-linecap="round"/><path d="M6 11.700H17.400" stroke="#e6ebef" stroke-width="2.700"/></svg>
<svg class="b" style="left:2796px;top:24px;" width="27" height="32" viewBox="0 0 27 32"><circle cx="10.700" cy="10.700" r="8.300" fill="none" stroke="#465a69" stroke-width="3.600"/><path d="M17 16L23.400 22" stroke="#465a69" stroke-width="3.800" stroke-linecap="round"/><path d="M1.500 27.500H15.500M1.500 23.200V31.500M15.500 23.200V31.500" stroke="#465a69" stroke-width="2.700" fill="none"/></svg>
<div class="b" style="left:1360.5px;top:81px;width:1484.5px;height:30px;overflow:hidden;">
<div class="b" style="left:0.0px;top:0px;width:2px;height:30px;background:#333;"></div>
<div class="b" style="left:31.4px;top:0px;width:2px;height:11.5px;background:#333;"></div>
<div class="b" style="left:63.3px;top:0px;width:2px;height:11.5px;background:#333;"></div>
<div class="b" style="left:95.1px;top:0px;width:2px;height:11.5px;background:#333;"></div>
<div class="b" style="left:127.0px;top:0px;width:2px;height:11.5px;background:#333;"></div>
<span class="t" style="left:5.50px;top:15.16px;font-size:18px;line-height:18px;color:#4c4c4c;font-weight:700;letter-spacing:-0.099px;">00:00:00.000</span>
<div class="b" style="left:159.4px;top:0px;width:2px;height:30px;background:#333;"></div>
<div class="b" style="left:190.8px;top:0px;width:2px;height:11.5px;background:#333;"></div>
<div class="b" style="left:222.7px;top:0px;width:2px;height:11.5px;background:#333;"></div>
<div class="b" style="left:254.5px;top:0px;width:2px;height:11.5px;background:#333;"></div>
<div class="b" style="left:286.4px;top:0px;width:2px;height:11.5px;background:#333;"></div>
<span class="t" style="left:164.90px;top:15.16px;font-size:18px;line-height:18px;color:#4c4c4c;font-weight:700;letter-spacing:-0.099px;">00:01:40.000</span>
<div class="b" style="left:318.8px;top:0px;width:2px;height:30px;background:#333;"></div>
<div class="b" style="left:350.2px;top:0px;width:2px;height:11.5px;background:#333;"></div>
<div class="b" style="left:382.1px;top:0px;width:2px;height:11.5px;background:#333;"></div>
<div class="b" style="left:413.9px;top:0px;width:2px;height:11.5px;background:#333;"></div>
<div class="b" style="left:445.8px;top:0px;width:2px;height:11.5px;background:#333;"></div>
<span class="t" style="left:324.30px;top:15.16px;font-size:18px;line-height:18px;color:#4c4c4c;font-weight:700;letter-spacing:-0.099px;">00:03:20.000</span>
<div class="b" style="left:478.2px;top:0px;width:2px;height:30px;background:#333;"></div>
<div class="b" style="left:509.6px;top:0px;width:2px;height:11.5px;background:#333;"></div>
<div class="b" style="left:541.5px;top:0px;width:2px;height:11.5px;background:#333;"></div>
<div class="b" style="left:573.3px;top:0px;width:2px;height:11.5px;background:#333;"></div>
<div class="b" style="left:605.2px;top:0px;width:2px;height:11.5px;background:#333;"></div>
<span class="t" style="left:483.70px;top:15.16px;font-size:18px;line-height:18px;color:#4c4c4c;font-weight:700;letter-spacing:-0.099px;">00:05:00.000</span>
<div class="b" style="left:637.6px;top:0px;width:2px;height:30px;background:#333;"></div>
<div class="b" style="left:669.0px;top:0px;width:2px;height:11.5px;background:#333;"></div>
<div class="b" style="left:700.9px;top:0px;width:2px;height:11.5px;background:#333;"></div>
<div class="b" style="left:732.7px;top:0px;width:2px;height:11.5px;background:#333;"></div>
<div class="b" style="left:764.6px;top:0px;width:2px;height:11.5px;background:#333;"></div>
<span class="t" style="left:643.10px;top:15.16px;font-size:18px;line-height:18px;color:#4c4c4c;font-weight:700;letter-spacing:-0.099px;">00:06:40.000</span>
<div class="b" style="left:797.0px;top:0px;width:2px;height:30px;background:#333;"></div>
<div class="b" style="left:828.4px;top:0px;width:2px;height:11.5px;background:#333;"></div>
<div class="b" style="left:860.3px;top:0px;width:2px;height:11.5px;background:#333;"></div>
<div class="b" style="left:892.1px;top:0px;width:2px;height:11.5px;background:#333;"></div>
<div class="b" style="left:924.0px;top:0px;width:2px;height:11.5px;background:#333;"></div>
<span class="t" style="left:802.50px;top:15.16px;font-size:18px;line-height:18px;color:#4c4c4c;font-weight:700;letter-spacing:-0.099px;">00:08:20.000</span>
<div class="b" style="left:956.4px;top:0px;width:2px;height:30px;background:#333;"></div>
<div class="b" style="left:987.8px;top:0px;width:2px;height:11.5px;background:#333;"></div>
<div class="b" style="left:1019.7px;top:0px;width:2px;height:11.5px;background:#333;"></div>
<div class="b" style="left:1051.5px;top:0px;width:2px;height:11.5px;background:#333;"></div>
<div class="b" style="left:1083.4px;top:0px;width:2px;height:11.5px;background:#333;"></div>
<span class="t" style="left:961.90px;top:15.16px;font-size:18px;line-height:18px;color:#4c4c4c;font-weight:700;letter-spacing:-0.099px;">00:10:00.000</span>
<div class="b" style="left:1115.8px;top:0px;width:2px;height:30px;background:#333;"></div>
<div class="b" style="left:1147.2px;top:0px;width:2px;height:11.5px;background:#333;"></div>
<div class="b" style="left:1179.1px;top:0px;width:2px;height:11.5px;background:#333;"></div>
<div class="b" style="left:1210.9px;top:0px;width:2px;height:11.5px;background:#333;"></div>
<div class="b" style="left:1242.8px;top:0px;width:2px;height:11.5px;background:#333;"></div>
<span class="t" style="left:1121.30px;top:15.16px;font-size:18px;line-height:18px;color:#4c4c4c;font-weight:700;letter-spacing:-0.009px;">00:11:40.000</span>
<div class="b" style="left:1275.2px;top:0px;width:2px;height:30px;background:#333;"></div>
<div class="b" style="left:1306.6px;top:0px;width:2px;height:11.5px;background:#333;"></div>
<div class="b" style="left:1338.5px;top:0px;width:2px;height:11.5px;background:#333;"></div>
<div class="b" style="left:1370.3px;top:0px;width:2px;height:11.5px;background:#333;"></div>
<div class="b" style="left:1402.2px;top:0px;width:2px;height:11.5px;background:#333;"></div>
<span class="t" style="left:1280.70px;top:15.16px;font-size:18px;line-height:18px;color:#4c4c4c;font-weight:700;letter-spacing:-0.099px;">00:13:20.000</span>
<div class="b" style="left:1434.6px;top:0px;width:2px;height:30px;background:#333;"></div>
<div class="b" style="left:1466.0px;top:0px;width:2px;height:11.5px;background:#333;"></div>
<span class="t" style="left:1440.10px;top:15.16px;font-size:18px;line-height:18px;color:#4c4c4c;font-weight:700;letter-spacing:-0.099px;">00:15:00.000</span>
</div>
<div class="b" style="left:1303px;top:111px;width:58px;height:150px;background:#b8c6d0;"></div>
<div class="b" style="left:1361px;top:111px;width:1484px;height:150px;background:#dce3ea;"></div>
<div class="b" style="left:1303px;top:261px;width:1542px;height:27px;background:#98abb6;"></div>
<div class="b" style="left:1303px;top:288px;width:1542px;height:3px;background:#555;"></div>
<span class="t" style="left:1308.00px;top:261.68px;font-size:22px;line-height:22px;color:#f3f6f8;letter-spacing:0.253px;-webkit-text-stroke:0.6px #f3f6f8;text-shadow:0 1px 1px rgba(60,80,95,.45);">john carpenter unheimliche shattenlichter - ADMIN</span>
<svg class="b" style="left:1312px;top:176px;" width="27" height="23" viewBox="0 0 27 23"><path d="M5 11V7.500a5.500 5.500 0 0 1 11 0V11" fill="none" stroke="#a7b4be" stroke-width="3"/><rect x="0" y="10" width="21" height="12.500" rx="2.500" fill="#a7b4be"/></svg>
<div class="b" style="left:1303px;top:291px;width:58px;height:150px;background:#b8c6d0;"></div>
<div class="b" style="left:1361px;top:291px;width:1484px;height:150px;background:#dce3ea;"></div>
<div class="b" style="left:1303px;top:441px;width:1542px;height:27px;background:#98abb6;"></div>
<div class="b" style="left:1303px;top:468px;width:1542px;height:3px;background:#555;"></div>
<span class="t" style="left:1308.00px;top:441.68px;font-size:22px;line-height:22px;color:#f3f6f8;letter-spacing:0.152px;-webkit-text-stroke:0.6px #f3f6f8;text-shadow:0 1px 1px rgba(60,80,95,.45);">chris reeves after the romance - ADMIN</span>
<svg class="b" style="left:1309px;top:355.5px;" width="27" height="23" viewBox="0 0 27 23"><path d="M14.500 11V7a5 5 0 0 1 10 0V9" fill="none" stroke="#6b7f8c" stroke-width="2.600" stroke-linecap="round"/><rect x="0" y="10" width="20" height="12.500" rx="2.500" fill="#6b7f8c"/></svg>
<div class="b" style="left:1303px;top:471px;width:58px;height:150px;background:#b8c6d0;"></div>
<div class="b" style="left:1361px;top:471px;width:1484px;height:150px;background:#dce3ea;"></div>
<div class="b" style="left:1303px;top:621px;width:1542px;height:27px;background:#98abb6;"></div>
<div class="b" style="left:1303px;top:648px;width:1542px;height:3px;background:#555;"></div>
<span class="t" style="left:1308.00px;top:621.68px;font-size:22px;line-height:22px;color:#f3f6f8;letter-spacing:0.133px;-webkit-text-stroke:0.6px #f3f6f8;text-shadow:0 1px 1px rgba(60,80,95,.45);">shriekback despite dense weed - ADMIN</span>
<svg class="b" style="left:1309px;top:535.5px;" width="27" height="23" viewBox="0 0 27 23"><path d="M14.500 11V7a5 5 0 0 1 10 0V9" fill="none" stroke="#6b7f8c" stroke-width="2.600" stroke-linecap="round"/><rect x="0" y="10" width="20" height="12.500" rx="2.500" fill="#6b7f8c"/></svg>
<div class="b" style="left:1303px;top:651px;width:58px;height:150px;background:#b8c6d0;"></div>
<div class="b" style="left:1361px;top:651px;width:1484px;height:150px;background:#dce3ea;"></div>
<div class="b" style="left:1303px;top:801px;width:1542px;height:27px;background:#98abb6;"></div>
<div class="b" style="left:1303px;top:828px;width:1542px;height:3px;background:#555;"></div>
<span class="t" style="left:1308.00px;top:801.68px;font-size:22px;line-height:22px;color:#f3f6f8;letter-spacing:-0.349px;-webkit-text-stroke:0.6px #f3f6f8;text-shadow:0 1px 1px rgba(60,80,95,.45);">Red Fox- Dem a Fight - Red Fox</span>
<svg class="b" style="left:1309px;top:715.5px;" width="27" height="23" viewBox="0 0 27 23"><path d="M14.500 11V7a5 5 0 0 1 10 0V9" fill="none" stroke="#6b7f8c" stroke-width="2.600" stroke-linecap="round"/><rect x="0" y="10" width="20" height="12.500" rx="2.500" fill="#6b7f8c"/></svg>
<svg class="b" style="left:0;top:0" width="2850" height="860" viewBox="0 0 2850 860">
<rect x="1361" y="111" width="376" height="150" fill="#b5d3ef"/>
<path d="M1365.1 261L1365.1 114.3L1366.6 192.0L1369.3 207.5L1370.5 167.1L1372.1 117.4L1373.6 118.8L1375.2 123.6L1376.7 131.1L1378.3 157.8L1380.6 120.5L1382.6 129.4L1384.5 160.9L1386.4 124.6L1388.4 114.3L1390.7 115.7L1393.0 120.5L1395.1 114.5L1396.9 112.8L1399.7 115.6L1402.4 125.2L1405.0 120.4L1407.8 119.0L1410.9 119.1L1414.0 119.8L1417.9 114.3L1421.8 112.8L1424.9 113.1L1428.0 114.3L1430.3 113.1L1432.6 112.8L1434.2 121.0L1435.7 150.0L1437.3 121.0L1438.9 112.8L1440.4 115.1L1442.0 123.6L1444.8 126.4L1447.4 136.1L1449.4 121.5L1451.3 117.4L1454.1 120.2L1456.7 129.8L1459.3 117.7L1462.1 114.3L1464.5 113.1L1466.8 112.8L1468.7 114.5L1470.7 120.5L1474.9 118.0L1479.2 117.4L1483.9 113.2L1488.5 112.0L1492.4 113.9L1496.3 120.5L1499.1 120.5L1501.7 120.5L1504.1 133.7L1506.4 117.4L1508.7 112.8L1510.3 116.5L1511.8 129.8L1514.6 122.5L1517.3 120.5L1519.9 123.3L1522.7 133.0L1524.3 118.4L1525.8 114.3L1527.7 121.3L1529.7 146.1L1531.7 120.1L1533.6 112.8L1536.4 117.6L1539.0 134.5L1540.6 131.4L1543.2 134.2L1546.0 143.8L1547.5 125.7L1549.1 120.5L1550.7 125.3L1552.2 142.3L1554.5 124.1L1556.9 119.0L1558.4 122.4L1560.0 134.5L1561.5 122.4L1563.1 119.0L1564.6 120.1L1566.2 123.6L1571.1 116.3L1576.3 114.3L1579.8 116.3L1583.3 123.6L1585.6 145.4L1587.9 128.3L1589.8 133.1L1591.8 150.0L1593.8 127.0L1595.7 120.5L1598.0 124.3L1600.3 137.6L1602.7 125.5L1605.0 122.1L1607.3 125.5L1609.7 137.6L1612.8 119.4L1615.9 114.3L1619.8 119.1L1623.6 136.1L1625.2 122.7L1626.7 119.0L1629.1 123.0L1631.4 137.6L1634.2 118.2L1636.8 112.8L1639.5 115.6L1642.3 125.2L1645.4 127.4L1648.5 135.3L1651.3 119.0L1653.9 114.3L1655.9 118.4L1657.8 133.0L1659.3 120.8L1660.9 117.4L1663.2 121.5L1665.6 136.1L1667.4 140.1L1669.4 154.7L1671.5 128.0L1673.3 120.5L1676.1 125.5L1678.8 143.0L1680.8 128.0L1682.6 123.6L1685.0 122.4L1687.3 122.1L1690.1 118.5L1692.7 117.4L1695.4 120.5L1698.2 131.4L1700.5 137.1L1702.8 157.8L1704.4 158.1L1705.9 159.3L1709.0 149.7L1712.1 146.9L1713.7 121.5L1715.2 114.3L1717.1 115.7L1719.1 120.5L1721.1 115.7L1723.0 114.3L1724.9 117.4L1726.9 128.3L1729.2 112.8L1730.8 117.9L1732.3 136.1L1733.9 192.0L1735.4 112.8L1735.4 261z" fill="#1a78c8"/><path d="M1365.1 114.3L1366.6 192.0L1369.3 207.5L1370.5 167.1L1372.1 117.4L1373.6 118.8L1375.2 123.6L1376.7 131.1L1378.3 157.8L1380.6 120.5L1382.6 129.4L1384.5 160.9L1386.4 124.6L1388.4 114.3L1390.7 115.7L1393.0 120.5L1395.1 114.5L1396.9 112.8L1399.7 115.6L1402.4 125.2L1405.0 120.4L1407.8 119.0L1410.9 119.1L1414.0 119.8L1417.9 114.3L1421.8 112.8L1424.9 113.1L1428.0 114.3L1430.3 113.1L1432.6 112.8L1434.2 121.0L1435.7 150.0L1437.3 121.0L1438.9 112.8L1440.4 115.1L1442.0 123.6L1444.8 126.4L1447.4 136.1L1449.4 121.5L1451.3 117.4L1454.1 120.2L1456.7 129.8L1459.3 117.7L1462.1 114.3L1464.5 113.1L1466.8 112.8L1468.7 114.5L1470.7 120.5L1474.9 118.0L1479.2 117.4L1483.9 113.2L1488.5 112.0L1492.4 113.9L1496.3 120.5L1499.1 120.5L1501.7 120.5L1504.1 133.7L1506.4 117.4L1508.7 112.8L1510.3 116.5L1511.8 129.8L1514.6 122.5L1517.3 120.5L1519.9 123.3L1522.7 133.0L1524.3 118.4L1525.8 114.3L1527.7 121.3L1529.7 146.1L1531.7 120.1L1533.6 112.8L1536.4 117.6L1539.0 134.5L1540.6 131.4L1543.2 134.2L1546.0 143.8L1547.5 125.7L1549.1 120.5L1550.7 125.3L1552.2 142.3L1554.5 124.1L1556.9 119.0L1558.4 122.4L1560.0 134.5L1561.5 122.4L1563.1 119.0L1564.6 120.1L1566.2 123.6L1571.1 116.3L1576.3 114.3L1579.8 116.3L1583.3 123.6L1585.6 145.4L1587.9 128.3L1589.8 133.1L1591.8 150.0L1593.8 127.0L1595.7 120.5L1598.0 124.3L1600.3 137.6L1602.7 125.5L1605.0 122.1L1607.3 125.5L1609.7 137.6L1612.8 119.4L1615.9 114.3L1619.8 119.1L1623.6 136.1L1625.2 122.7L1626.7 119.0L1629.1 123.0L1631.4 137.6L1634.2 118.2L1636.8 112.8L1639.5 115.6L1642.3 125.2L1645.4 127.4L1648.5 135.3L1651.3 119.0L1653.9 114.3L1655.9 118.4L1657.8 133.0L1659.3 120.8L1660.9 117.4L1663.2 121.5L1665.6 136.1L1667.4 140.1L1669.4 154.7L1671.5 128.0L1673.3 120.5L1676.1 125.5L1678.8 143.0L1680.8 128.0L1682.6 123.6L1685.0 122.4L1687.3 122.1L1690.1 118.5L1692.7 117.4L1695.4 120.5L1698.2 131.4L1700.5 137.1L1702.8 157.8L1704.4 158.1L1705.9 159.3L1709.0 149.7L1712.1 146.9L1713.7 121.5L1715.2 114.3L1717.1 115.7L1719.1 120.5L1721.1 115.7L1723.0 114.3L1724.9 117.4L1726.9 128.3L1729.2 112.8L1730.8 117.9L1732.3 136.1L1733.9 192.0L1735.4 112.8" fill="none" stroke="#e4f0fa" stroke-width="1.500" opacity=".8"/>
<rect x="1362" y="112" width="3" height="148" fill="#14868c"/>
<rect x="1733.500" y="112" width="2" height="148" fill="#4a9fd8" opacity=".7"/>
<rect x="1739" y="291" width="372" height="150" fill="#b9d8da"/>
<path d="M1742.1 441L1742.1 375.1L1744.4 378.2L1746.7 396.8L1749.1 376.6L1752.2 378.9L1756.1 372.0L1759.9 376.6L1764.6 390.6L1767.7 385.9L1770.0 390.6L1773.1 361.1L1777.0 381.3L1780.9 362.6L1783.2 364.2L1787.9 377.4L1791.8 372.7L1794.9 375.8L1798.0 365.7L1801.1 354.1L1804.2 360.3L1807.3 344.8L1809.6 342.5L1813.5 348.7L1817.4 344.0L1819.7 353.3L1822.8 372.0L1826.7 351.8L1828.3 349.4L1832.1 362.6L1836.8 371.2L1839.1 365.7L1842.2 338.6L1843.8 336.2L1849.2 345.6L1855.4 362.6L1860.9 353.3L1862.4 336.2L1864.8 336.2L1867.1 364.2L1869.4 357.2L1874.1 372.7L1878.0 361.9L1881.8 372.7L1886.5 353.3L1889.6 339.3L1891.9 340.1L1895.8 358.8L1902.0 340.9L1903.6 340.9L1909.0 349.4L1912.1 366.5L1916.0 356.4L1922.2 350.2L1924.5 365.7L1928.4 380.5L1933.1 334.7L1937.0 334.7L1940.8 361.1L1944.7 357.2L1947.0 361.9L1950.9 346.3L1954.8 362.6L1957.9 365.0L1962.6 350.2L1966.5 358.0L1969.6 353.3L1972.7 373.5L1975.0 374.3L1977.3 385.9L1980.4 361.1L1983.5 385.2L1987.4 374.3L1989.8 371.2L1993.6 344.0L1997.5 339.3L2003.0 365.0L2008.4 349.4L2013.8 362.6L2016.9 374.3L2021.6 343.2L2023.9 342.5L2027.0 351.0L2031.7 337.8L2034.0 337.8L2037.1 348.7L2041.0 335.5L2043.3 338.6L2047.2 366.5L2052.6 340.1L2056.5 344.8L2060.4 343.2L2065.1 368.9L2068.2 361.1L2073.6 354.9L2077.5 376.6L2080.6 379.7L2085.2 413.9L2089.1 420.1L2093.0 432.5L2100.8 438.0L2110.1 440.7L2110.1 441z" fill="#269c8f"/><path d="M1742.1 375.1L1744.4 378.2L1746.7 396.8L1749.1 376.6L1752.2 378.9L1756.1 372.0L1759.9 376.6L1764.6 390.6L1767.7 385.9L1770.0 390.6L1773.1 361.1L1777.0 381.3L1780.9 362.6L1783.2 364.2L1787.9 377.4L1791.8 372.7L1794.9 375.8L1798.0 365.7L1801.1 354.1L1804.2 360.3L1807.3 344.8L1809.6 342.5L1813.5 348.7L1817.4 344.0L1819.7 353.3L1822.8 372.0L1826.7 351.8L1828.3 349.4L1832.1 362.6L1836.8 371.2L1839.1 365.7L1842.2 338.6L1843.8 336.2L1849.2 345.6L1855.4 362.6L1860.9 353.3L1862.4 336.2L1864.8 336.2L1867.1 364.2L1869.4 357.2L1874.1 372.7L1878.0 361.9L1881.8 372.7L1886.5 353.3L1889.6 339.3L1891.9 340.1L1895.8 358.8L1902.0 340.9L1903.6 340.9L1909.0 349.4L1912.1 366.5L1916.0 356.4L1922.2 350.2L1924.5 365.7L1928.4 380.5L1933.1 334.7L1937.0 334.7L1940.8 361.1L1944.7 357.2L1947.0 361.9L1950.9 346.3L1954.8 362.6L1957.9 365.0L1962.6 350.2L1966.5 358.0L1969.6 353.3L1972.7 373.5L1975.0 374.3L1977.3 385.9L1980.4 361.1L1983.5 385.2L1987.4 374.3L1989.8 371.2L1993.6 344.0L1997.5 339.3L2003.0 365.0L2008.4 349.4L2013.8 362.6L2016.9 374.3L2021.6 343.2L2023.9 342.5L2027.0 351.0L2031.7 337.8L2034.0 337.8L2037.1 348.7L2041.0 335.5L2043.3 338.6L2047.2 366.5L2052.6 340.1L2056.5 344.8L2060.4 343.2L2065.1 368.9L2068.2 361.1L2073.6 354.9L2077.5 376.6L2080.6 379.7L2085.2 413.9L2089.1 420.1L2093.0 432.5L2100.8 438.0L2110.1 440.7" fill="none" stroke="#e6f3f2" stroke-width="1.500" opacity=".8"/>
<rect x="1739" y="291" width="3" height="150" fill="#0f8592"/><rect x="2107.800" y="291" width="2.800" height="150" fill="#0f8592"/><rect x="2110.600" y="351" width="1.400" height="90" fill="#e9a367"/>
<rect x="2112" y="471" width="369" height="150" fill="#d5dfc8"/>
<path d="M2116.0 621L2116.0 555.1L2119.8 549.6L2124.5 545.7L2128.4 535.7L2133.8 553.5L2137.7 537.2L2140.8 549.6L2143.9 541.1L2147.8 550.4L2152.5 539.5L2155.6 548.1L2160.2 535.7L2165.7 526.3L2169.5 541.1L2174.2 548.9L2179.6 554.3L2185.1 531.8L2188.9 545.7L2192.8 539.5L2197.5 534.9L2202.1 545.7L2207.6 527.1L2210.7 536.4L2213.8 548.1L2218.4 552.0L2223.1 538.8L2227.0 536.4L2230.9 530.2L2234.0 547.3L2239.4 535.7L2245.6 549.6L2249.5 541.9L2254.2 549.6L2258.0 531.8L2261.9 537.2L2267.4 541.1L2272.0 537.2L2275.9 543.4L2280.6 529.4L2283.7 529.4L2288.3 541.9L2293.0 538.0L2296.9 527.9L2302.3 541.1L2306.2 538.8L2309.3 551.2L2313.9 531.8L2317.0 527.9L2321.7 545.7L2326.4 538.0L2330.2 531.8L2335.7 545.0L2339.6 538.8L2345.0 546.5L2348.1 541.1L2350.4 546.5L2356.6 531.8L2362.1 533.3L2366.0 544.2L2369.1 536.4L2373.0 545.0L2376.8 533.3L2380.7 547.3L2383.8 527.1L2388.5 523.2L2391.6 526.3L2393.9 534.9L2397.8 539.5L2401.7 533.3L2405.6 551.2L2408.7 538.8L2413.3 535.7L2418.8 543.4L2425.0 533.3L2430.4 570.6L2434.3 552.0L2438.2 557.4L2444.4 554.3L2449.8 551.2L2453.7 566.7L2458.4 562.8L2463.0 553.5L2467.7 548.9L2472.3 598.5L2477.0 620.3L2477.0 621z" fill="#adc037"/><path d="M2116.0 555.1L2119.8 549.6L2124.5 545.7L2128.4 535.7L2133.8 553.5L2137.7 537.2L2140.8 549.6L2143.9 541.1L2147.8 550.4L2152.5 539.5L2155.6 548.1L2160.2 535.7L2165.7 526.3L2169.5 541.1L2174.2 548.9L2179.6 554.3L2185.1 531.8L2188.9 545.7L2192.8 539.5L2197.5 534.9L2202.1 545.7L2207.6 527.1L2210.7 536.4L2213.8 548.1L2218.4 552.0L2223.1 538.8L2227.0 536.4L2230.9 530.2L2234.0 547.3L2239.4 535.7L2245.6 549.6L2249.5 541.9L2254.2 549.6L2258.0 531.8L2261.9 537.2L2267.4 541.1L2272.0 537.2L2275.9 543.4L2280.6 529.4L2283.7 529.4L2288.3 541.9L2293.0 538.0L2296.9 527.9L2302.3 541.1L2306.2 538.8L2309.3 551.2L2313.9 531.8L2317.0 527.9L2321.7 545.7L2326.4 538.0L2330.2 531.8L2335.7 545.0L2339.6 538.8L2345.0 546.5L2348.1 541.1L2350.4 546.5L2356.6 531.8L2362.1 533.3L2366.0 544.2L2369.1 536.4L2373.0 545.0L2376.8 533.3L2380.7 547.3L2383.8 527.1L2388.5 523.2L2391.6 526.3L2393.9 534.9L2397.8 539.5L2401.7 533.3L2405.6 551.2L2408.7 538.8L2413.3 535.7L2418.8 543.4L2425.0 533.3L2430.4 570.6L2434.3 552.0L2438.2 557.4L2444.4 554.3L2449.8 551.2L2453.7 566.7L2458.4 562.8L2463.0 553.5L2467.7 548.9L2472.3 598.5L2477.0 620.3" fill="none" stroke="#f4f7e6" stroke-width="1.500" opacity=".8"/>
<rect x="2112" y="471" width="3" height="150" fill="#0f8592"/><rect x="2476.700" y="471" width="2.800" height="150" fill="#0f8592"/><rect x="2479.500" y="531" width="1.400" height="90" fill="#e9a367"/>
<rect x="2480.500" y="651" width="364.500" height="150" fill="#dfd6c6"/>
<path d="M2484.2 801L2484.2 748.0L2489.5 761.6L2494.8 744.9L2497.9 735.8L2500.1 713.1L2505.4 705.6L2508.4 719.2L2511.5 659.4L2513.7 659.4L2516.8 710.1L2520.6 657.1L2522.8 657.1L2526.6 749.5L2530.4 697.2L2534.2 705.6L2538.7 702.5L2543.3 696.5L2547.8 719.2L2553.1 688.9L2555.4 688.9L2559.9 713.1L2565.2 690.4L2567.5 691.2L2572.0 717.7L2575.8 693.4L2580.4 704.0L2584.1 697.2L2586.4 699.5L2588.7 689.7L2590.5 690.4L2593.2 760.8L2597.0 685.9L2600.0 697.2L2604.6 693.4L2608.4 704.0L2612.2 685.1L2614.4 685.1L2618.2 703.3L2622.8 693.4L2625.8 699.5L2628.8 692.7L2631.8 709.3L2635.6 684.4L2646.2 695.0L2650.0 744.2L2653.8 689.7L2656.1 696.5L2659.8 689.7L2665.1 702.5L2670.4 693.4L2677.3 691.9L2682.6 698.0L2686.3 688.9L2691.6 701.8L2695.4 693.4L2702.2 693.4L2706.8 687.4L2712.1 697.2L2715.9 690.4L2718.1 696.5L2721.2 681.3L2726.5 751.7L2731.0 716.2L2734.8 684.4L2737.1 698.0L2742.4 705.6L2748.4 754.8L2753.7 681.3L2759.0 737.4L2764.3 695.0L2773.4 703.3L2775.7 697.2L2779.5 710.9L2783.2 697.2L2790.1 706.3L2793.8 684.4L2797.6 697.2L2799.9 698.0L2802.9 709.3L2806.7 693.4L2815.8 707.8L2821.1 676.8L2826.4 713.1L2831.7 693.4L2834.7 705.6L2840.0 776.7L2844.6 763.1L2844.6 801z" fill="#d98a28"/><path d="M2484.2 748.0L2489.5 761.6L2494.8 744.9L2497.9 735.8L2500.1 713.1L2505.4 705.6L2508.4 719.2L2511.5 659.4L2513.7 659.4L2516.8 710.1L2520.6 657.1L2522.8 657.1L2526.6 749.5L2530.4 697.2L2534.2 705.6L2538.7 702.5L2543.3 696.5L2547.8 719.2L2553.1 688.9L2555.4 688.9L2559.9 713.1L2565.2 690.4L2567.5 691.2L2572.0 717.7L2575.8 693.4L2580.4 704.0L2584.1 697.2L2586.4 699.5L2588.7 689.7L2590.5 690.4L2593.2 760.8L2597.0 685.9L2600.0 697.2L2604.6 693.4L2608.4 704.0L2612.2 685.1L2614.4 685.1L2618.2 703.3L2622.8 693.4L2625.8 699.5L2628.8 692.7L2631.8 709.3L2635.6 684.4L2646.2 695.0L2650.0 744.2L2653.8 689.7L2656.1 696.5L2659.8 689.7L2665.1 702.5L2670.4 693.4L2677.3 691.9L2682.6 698.0L2686.3 688.9L2691.6 701.8L2695.4 693.4L2702.2 693.4L2706.8 687.4L2712.1 697.2L2715.9 690.4L2718.1 696.5L2721.2 681.3L2726.5 751.7L2731.0 716.2L2734.8 684.4L2737.1 698.0L2742.4 705.6L2748.4 754.8L2753.7 681.3L2759.0 737.4L2764.3 695.0L2773.4 703.3L2775.7 697.2L2779.5 710.9L2783.2 697.2L2790.1 706.3L2793.8 684.4L2797.6 697.2L2799.9 698.0L2802.9 709.3L2806.7 693.4L2815.8 707.8L2821.1 676.8L2826.4 713.1L2831.7 693.4L2834.7 705.6L2840.0 776.7L2844.6 763.1" fill="none" stroke="#faefe0" stroke-width="1.500" opacity=".8"/>
<rect x="2480" y="745" width="1.400" height="56" fill="#e08a30"/><rect x="2481.200" y="651" width="3" height="150" fill="#0f8592"/>
<rect x="1372" y="170" width="354" height="2.200" fill="#8a8782"/>
<rect x="1748" y="350" width="351" height="2.200" fill="#e2a66f"/>
<rect x="2121" y="530" width="347" height="2.200" fill="#e8a566"/>
<rect x="2490" y="710" width="346" height="2.200" fill="#ee8b34"/>
<path d="M1364.5 182h5.500l3 5.500l-8.500 9z" fill="#dfa030"/>
<path d="M1364.5 233.5l5.500 6.500l-5.500 0z" fill="#d9a050" opacity=".85"/>
<path d="M1742 362h5.500l3 5.500l-8.500 9z" fill="#dfa030"/>
<path d="M1742 413.5l5.500 6.500l-5.500 0z" fill="#d9a050" opacity=".85"/>
<path d="M2115 542h5.500l3 5.500l-8.500 9z" fill="#dfa030"/>
<path d="M2115 593.5l5.500 6.500l-5.500 0z" fill="#d9a050" opacity=".85"/>
<path d="M2484 722h5.500l3 5.500l-8.500 9z" fill="#dfa030"/>
<path d="M2484 773.5l5.500 6.500l-5.500 0z" fill="#d9a050" opacity=".85"/>
<path d="M1362 260.5V237.0L1379 248.75z" fill="#14868c"/>
<path d="M1736.5 260.5V237.0L1719.5 248.75z" fill="#14868c"/>
<path d="M1742 441V417.5L1755.5 429.25z" fill="#14868c"/>
<path d="M2107.8 441V417.5L2093.0 429.25z" fill="#14868c"/>
<path d="M2115 621V597.5L2128.5 609.25z" fill="#14868c"/>
<path d="M2476.7 621V597.5L2461.8999999999996 609.25z" fill="#14868c"/>
<path d="M2484.2 801V777.5L2497.7 789.25z" fill="#14868c"/>
<path d="M2845 801V777.5L2829.5 789.25z" fill="#14868c"/>
<rect x="1362" y="112" width="374.500" height="148" fill="none" stroke="#ee1c1c" stroke-width="2"/>
</svg>
<div class="b" style="left:1361px;top:159px;width:11px;height:22px;overflow:hidden;"><svg class="b" style="left:-11px;top:0px;" width="22" height="22" viewBox="0 0 22 22"><rect x="0" y="0" width="22" height="22" fill="#a8a8a8"/><path d="M1.800 1.800H19.500L1.800 19.500z" fill="#efefef"/><rect x="0.500" y="0.500" width="21" height="21" fill="none" stroke="#a2a2a2" stroke-width="1"/></svg></div>
<svg class="b" style="left:1725.5px;top:159px;" width="22" height="22" viewBox="0 0 22 22"><rect x="0" y="0" width="22" height="22" fill="#a8a8a8"/><path d="M2.500 1.800H20.200V19.500z" fill="#efefef"/><rect x="0.500" y="0.500" width="21" height="21" fill="none" stroke="#a2a2a2" stroke-width="1"/></svg>
<svg class="b" style="left:1725.8px;top:339px;" width="22" height="22" viewBox="0 0 22 22"><rect x="0" y="0" width="22" height="22" fill="#a8a8a8"/><path d="M1.800 1.800H19.500L1.800 19.500z" fill="#efefef"/><rect x="0.500" y="0.500" width="21" height="21" fill="none" stroke="#a2a2a2" stroke-width="1"/></svg>
<svg class="b" style="left:2099px;top:339px;" width="22" height="22" viewBox="0 0 22 22"><rect x="0" y="0" width="22" height="22" fill="#a8a8a8"/><path d="M2.500 1.800H20.200V19.500z" fill="#efefef"/><rect x="0.500" y="0.500" width="21" height="21" fill="none" stroke="#a2a2a2" stroke-width="1"/></svg>
<svg class="b" style="left:2099px;top:519px;" width="22" height="22" viewBox="0 0 22 22"><rect x="0" y="0" width="22" height="22" fill="#a8a8a8"/><path d="M1.800 1.800H19.500L1.800 19.500z" fill="#efefef"/><rect x="0.500" y="0.500" width="21" height="21" fill="none" stroke="#a2a2a2" stroke-width="1"/></svg>
<svg class="b" style="left:2467.7px;top:519px;" width="22" height="22" viewBox="0 0 22 22"><rect x="0" y="0" width="22" height="22" fill="#a8a8a8"/><path d="M2.500 1.800H20.200V19.500z" fill="#efefef"/><rect x="0.500" y="0.500" width="21" height="21" fill="none" stroke="#a2a2a2" stroke-width="1"/></svg>
<svg class="b" style="left:2467.9px;top:699px;" width="22" height="22" viewBox="0 0 22 22"><rect x="0" y="0" width="22" height="22" fill="#a8a8a8"/><path d="M1.800 1.800H19.500L1.800 19.500z" fill="#efefef"/><rect x="0.500" y="0.500" width="21" height="21" fill="none" stroke="#a2a2a2" stroke-width="1"/></svg>
<div class="b" style="left:2835.500px;top:699px;width:9.500px;height:22px;overflow:hidden;"><svg class="b" style="left:0px;top:0px;" width="22" height="22" viewBox="0 0 22 22"><rect x="0" y="0" width="22" height="22" fill="#a8a8a8"/><path d="M2.500 1.800H20.200V19.500z" fill="#efefef"/><rect x="0.500" y="0.500" width="21" height="21" fill="none" stroke="#a2a2a2" stroke-width="1"/></svg></div>
<div class="b" style="left:1704px;top:98px;width:6.5px;height:729px;background:#ee5f5b;border-left:1px solid #f6d4d2;border-right:1px solid #f6d4d2;"></div>
<div class="b" style="left:1695px;top:82px;width:25.5px;height:25.5px;background:#fff;border-radius:50%;border:4px solid #2176c1;"></div>
<div class="b" style="left:1303px;top:831px;width:1542px;height:25px;background:#fcfcfc;border-top:2px solid #e1e7ec;"></div>
<svg class="b" style="left:1306px;top:837px;" width="12" height="16" viewBox="0 0 12 16"><path d="M11 1.500V14.500L1.500 8z" fill="#8d8d8d" stroke="#8d8d8d" stroke-width="1.500" stroke-linejoin="round"/></svg>
<svg class="b" style="left:2829.5px;top:837px;" width="12" height="16" viewBox="0 0 12 16"><path d="M1 1.500V14.500L10.500 8z" fill="#8d8d8d" stroke="#8d8d8d" stroke-width="1.500" stroke-linejoin="round"/></svg>
<div class="b" style="left:1303px;top:856px;width:1542px;height:83px;background:#344353;"></div>
<div class="b" style="left:1946px;top:868px;width:60px;height:60px;border:3px solid #9fb0c0;border-radius:50%;"></div>
<div class="b" style="left:2011px;top:867px;width:60px;height:60px;border:3px solid #9fb0c0;border-radius:50%;"></div>
<div class="b" style="left:2076px;top:867px;width:60px;height:60px;border:3px solid #9fb0c0;border-radius:50%;"></div>
<div class="b" style="left:2141px;top:867px;width:60px;height:60px;border:3px solid #9fb0c0;border-radius:50%;"></div>
<svg class="b" style="left:1968px;top:885.5px;" width="16" height="22" viewBox="0 0 16 22"><rect x="4.300" y="0.500" width="7.400" height="13" rx="3.700" fill="#9fb0c0"/><path d="M1.200 9.500a6.800 6.800 0 0 0 13.600 0" fill="none" stroke="#9fb0c0" stroke-width="1.500"/><path d="M8 16.500V20M3.800 20.300H12.200" stroke="#9fb0c0" stroke-width="1.500" fill="none"/></svg>
<svg class="b" style="left:2001px;top:865px;" width="18" height="11" viewBox="0 0 18 11"><path d="M1 10L9 1.800L17 10" fill="none" stroke="#9fb0c0" stroke-width="1.800"/></svg>
<div class="b" style="left:2029.8px;top:884.2px;width:22.8px;height:22.8px;background:#ff0000;border-radius:50%;"></div>
<svg class="b" style="left:2097px;top:885px;" width="19" height="22" viewBox="0 0 19 22"><path d="M1.500 1.500L17.500 11L1.500 20.500z" fill="#84c813" stroke="#84c813" stroke-width="1.600" stroke-linejoin="round"/></svg>
<svg class="b" style="left:2164px;top:887px;" width="15" height="18" viewBox="0 0 15 18"><rect x="0" y="0.500" width="3.200" height="16.500" fill="#9fb0c0"/><path d="M14.800 0.500V17L3.400 8.750z" fill="#9fb0c0"/></svg>
<span class="t" style="left:2639.00px;top:861.69px;font-size:19.5px;line-height:19.5px;color:#8fa3b5;letter-spacing:-1.594px;transform-origin:0 0;">-60</span>
<span class="t" style="left:2673.50px;top:861.69px;font-size:19.5px;line-height:19.5px;color:#8fa3b5;letter-spacing:-1.544px;transform-origin:0 0;">-30</span>
<span class="t" style="left:2721.80px;top:861.69px;font-size:19.5px;line-height:19.5px;color:#8fa3b5;letter-spacing:-1.094px;transform-origin:0 0;">-12</span>
<span class="t" style="left:2756.20px;top:861.69px;font-size:19.5px;line-height:19.5px;color:#8fa3b5;letter-spacing:-1.944px;transform-origin:0 0;">-6</span>
<span class="t" style="left:2783.80px;top:861.69px;font-size:19.5px;line-height:19.5px;color:#8fa3b5;letter-spacing:-1.944px;transform-origin:0 0;">-3</span>
<span class="t" style="left:2820.70px;top:861.69px;font-size:19.5px;line-height:19.5px;color:#8fa3b5;transform-origin:0 0;">0</span>
<div class="b" style="left:2642.2px;top:884px;width:5px;height:18px;background:#2f5500;"></div>
<div class="b" style="left:2651.2px;top:884px;width:5px;height:18px;background:#2f5500;"></div>
<div class="b" style="left:2660.3px;top:884px;width:5px;height:18px;background:#2f5500;"></div>
<div class="b" style="left:2669.3px;top:884px;width:5px;height:18px;background:#2f5500;"></div>
<div class="b" style="left:2678.4px;top:884px;width:5px;height:18px;background:#2f5500;"></div>
<div class="b" style="left:2687.4px;top:884px;width:5px;height:18px;background:#2f5500;"></div>
<div class="b" style="left:2696.4px;top:884px;width:5px;height:18px;background:#2f5500;"></div>
<div class="b" style="left:2705.5px;top:884px;width:5px;height:18px;background:#2f5500;"></div>
<div class="b" style="left:2714.5px;top:884px;width:5px;height:18px;background:#2f5500;"></div>
<div class="b" style="left:2723.6px;top:884px;width:5px;height:18px;background:#2f5500;"></div>
<div class="b" style="left:2732.6px;top:884px;width:5px;height:18px;background:#2f5500;"></div>
<div class="b" style="left:2741.6px;top:884px;width:5px;height:18px;background:#2f5500;"></div>
<div class="b" style="left:2750.7px;top:884px;width:5px;height:18px;background:#2f5500;"></div>
<div class="b" style="left:2759.7px;top:884px;width:5px;height:18px;background:#2f5500;"></div>
<div class="b" style="left:2768.8px;top:884px;width:5px;height:18px;background:#3f5c0e;"></div>
<div class="b" style="left:2777.8px;top:884px;width:5px;height:18px;background:#4d651d;"></div>
<div class="b" style="left:2786.8px;top:884px;width:5px;height:18px;background:#5d6d27;"></div>
<div class="b" style="left:2795.9px;top:884px;width:5px;height:18px;background:#6e7633;"></div>
<div class="b" style="left:2804.9px;top:884px;width:5px;height:18px;background:#7f7d3b;"></div>
<div class="b" style="left:2814.0px;top:884px;width:5px;height:18px;background:#7d5529;"></div>
<div class="b" style="left:2823.0px;top:884px;width:5px;height:18px;background:#73291a;"></div>
<div class="b" style="left:2638px;top:918px;width:188px;height:6px;background:#aaa;border-radius:3px;"></div>
<div class="b" style="left:2816px;top:913px;width:17.5px;height:17.5px;background:#aaa;border-radius:50%;border:1px solid #f2f2f2;"></div>
<div class="b" style="left:1299px;top:-3px;width:1550px;height:946px;border:4px solid #e8141c;z-index:6;"></div>
<span class="t" style="left:1315.00px;top:973.30px;font-size:21.5px;line-height:21.5px;color:#2a2a2e;font-weight:700;letter-spacing:0.172px;">Marker Legend</span>
<svg class="b" style="left:1314px;top:1007.5px;" width="18" height="19" viewBox="0 0 18 19"><path d="M1 1.200L16 9.500L1 17.800z" fill="#14868c" stroke="#14868c" stroke-width="1.500" stroke-linejoin="round"/></svg>
<span class="t" style="left:1352.50px;top:1008.07px;font-size:20px;line-height:20px;color:#2c2c30;letter-spacing:0.409px;">Mark In / Out</span>
<svg class="b" style="left:1313px;top:1036px;" width="30" height="23" viewBox="0 0 30 23"><path d="M1.500 1.500L27.500 21" stroke="#f39c12" stroke-width="1.900"/></svg>
<span class="t" style="left:1352.50px;top:1038.07px;font-size:20px;line-height:20px;color:#2c2c30;letter-spacing:0.189px;">Fade In / Out</span>
<div class="b" style="left:1317.6px;top:1064.1px;width:18px;height:18px;background:#32cd32;transform:rotate(45deg);border-radius:3px;"></div>
<span class="t" style="left:1352.50px;top:1067.57px;font-size:20px;line-height:20px;color:#2c2c30;letter-spacing:0.346px;">Link In / Out</span>
<div class="b" style="left:2086.2px;top:1003.9px;width:18px;height:18px;background:#ffd800;transform:rotate(45deg);border-radius:3px;"></div>
<span class="t" style="left:2122.00px;top:1007.57px;font-size:20px;line-height:20px;color:#2c2c30;letter-spacing:0.329px;">Intro / Outro 1</span>
<div class="b" style="left:2086.2px;top:1034px;width:18px;height:18px;background:#cf9a36;transform:rotate(45deg);border-radius:3px;"></div>
<span class="t" style="left:2122.00px;top:1038.07px;font-size:20px;line-height:20px;color:#2c2c30;letter-spacing:0.472px;">Intro / Outro 2</span>
<span class="t" style="left:2461.50px;top:969.30px;font-size:28px;line-height:28px;color:#e8202a;letter-spacing:0.554px;">Transition Editor</span>
<div class="b" style="left:1300px;top:1116px;width:421px;height:50px;background:#047a6c;border-radius:6px 0 0 6px;"></div>
<span class="t" style="left:1318.50px;top:1130.57px;font-size:20px;line-height:20px;color:#fff;letter-spacing:-0.365px;-webkit-text-stroke:0.3px #fff;">Save</span>
<span class="t" style="left:1400.00px;top:1130.57px;font-size:20px;line-height:20px;color:#fff;letter-spacing:0.394px;-webkit-text-stroke:0.3px #fff;">Save and move to next transition</span>
<div class="b" style="left:1721px;top:1116px;width:101.5px;height:50px;background:#fff;border:1px solid #cfcfcf;border-left:none;border-radius:0 6px 6px 0;"></div>
<span class="t" style="left:1741.00px;top:1130.57px;font-size:20px;line-height:20px;color:#2c2c30;letter-spacing:0.047px;">Cancel</span>
<span class="t" style="left:1300.00px;top:1228.53px;font-size:23px;line-height:23px;color:#e8202a;letter-spacing:0.719px;">Rundown</span>
</body></html>
